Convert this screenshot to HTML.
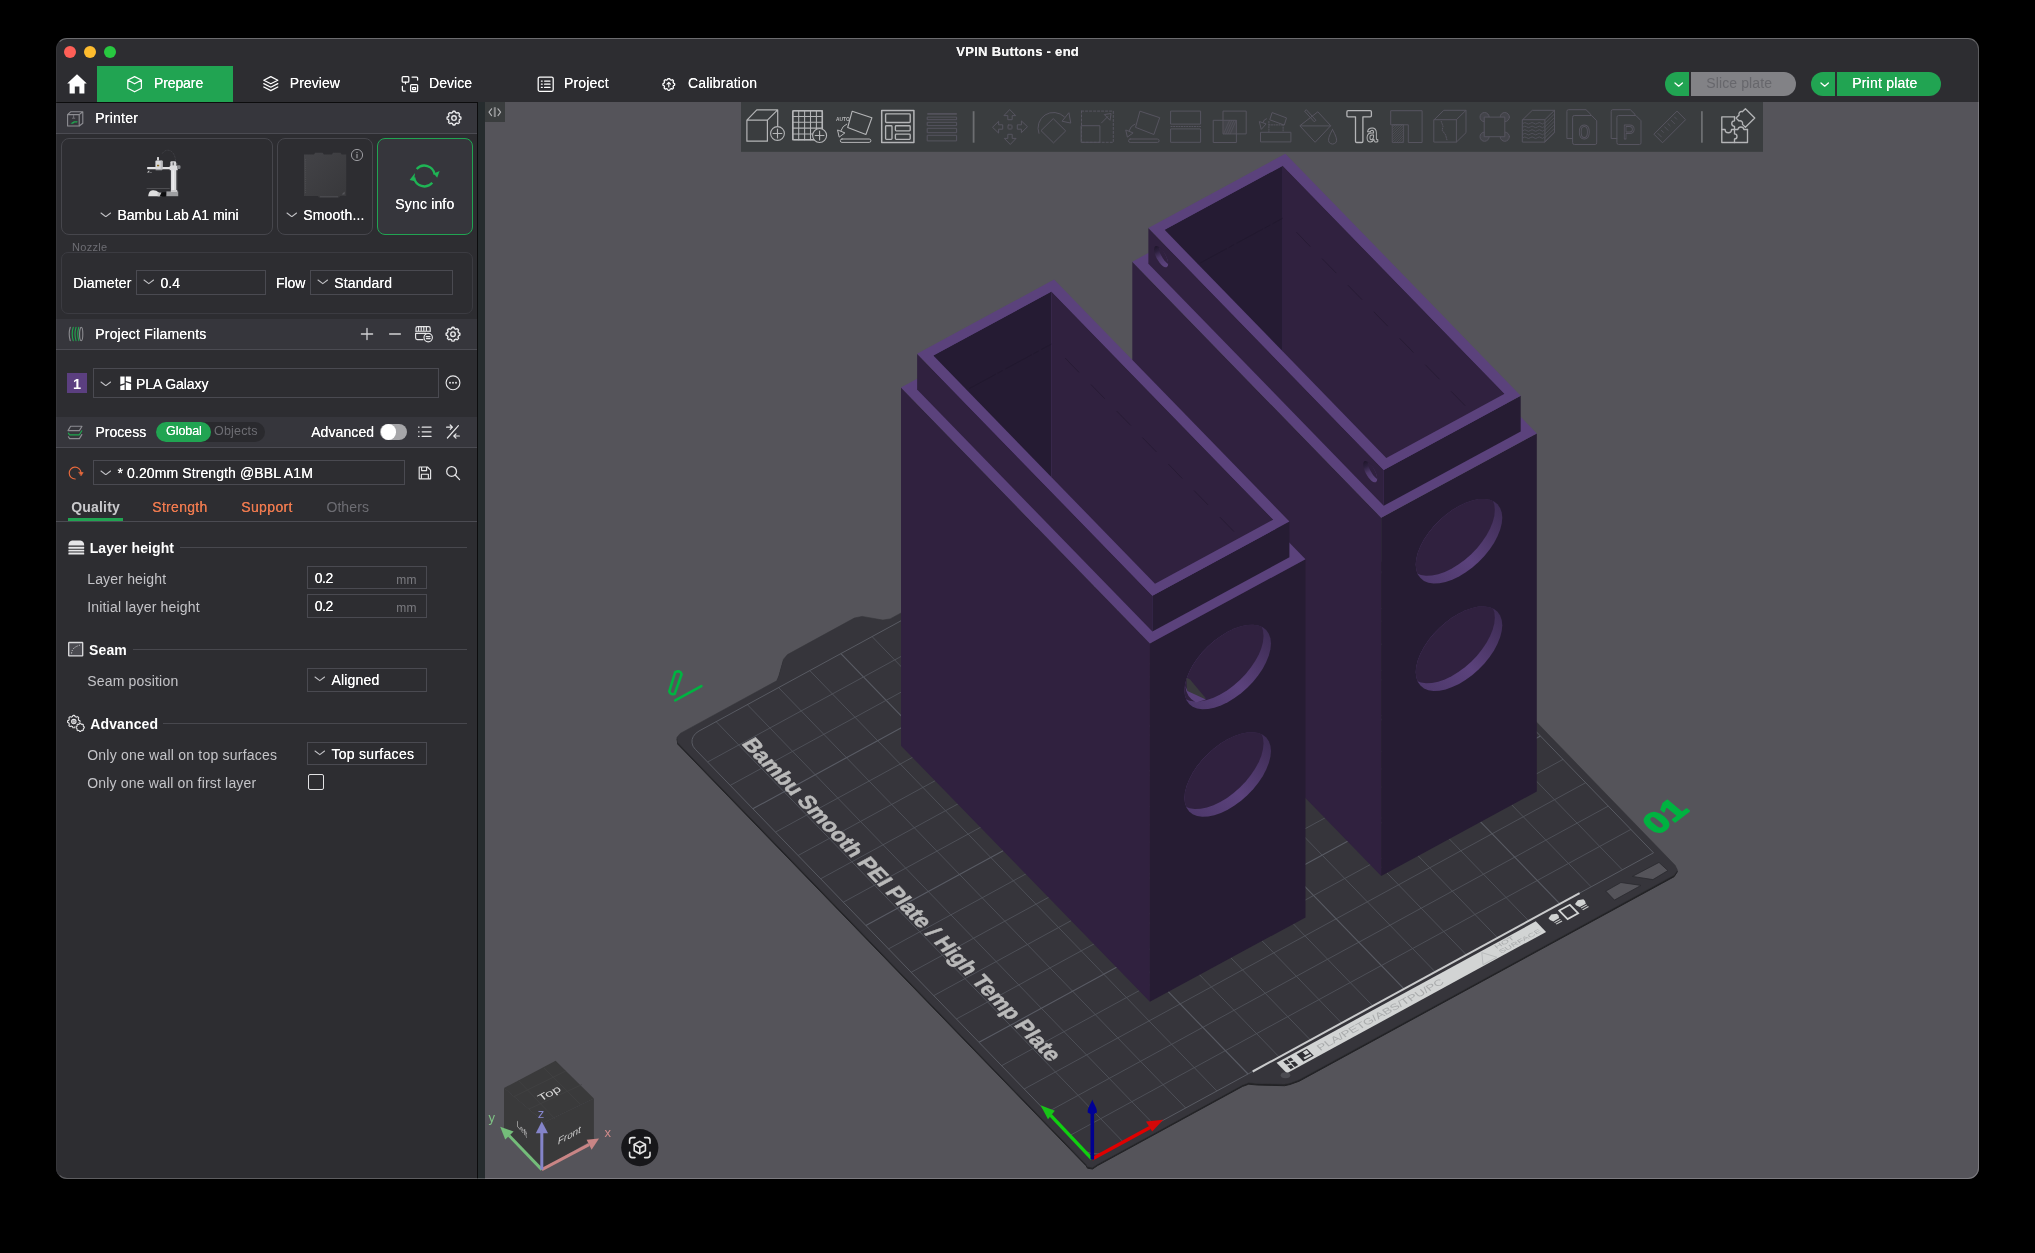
<!DOCTYPE html>
<html><head><meta charset="utf-8"><title>Bambu Studio</title><style>
html,body{margin:0;padding:0;background:#000;}
body{width:2035px;height:1253px;overflow:hidden;position:relative;font-family:"Liberation Sans",sans-serif;}
.win{position:absolute;left:56px;top:38px;width:1923px;height:1141px;border-radius:11px;overflow:hidden;background:#2d2d31;}
.in{position:absolute;left:-56px;top:-38px;width:2035px;height:1253px;will-change:transform;}
.a{position:absolute;}
.t{position:absolute;white-space:pre;font-family:"Liberation Sans",sans-serif;}
.edge{position:absolute;left:56px;top:38px;width:1923px;height:1141px;border-radius:11px;box-sizing:border-box;border:1px solid rgba(255,255,255,.23);border-top-color:rgba(255,255,255,.3);border-left-color:rgba(255,255,255,.05);pointer-events:none;}
</style></head>
<body>
<div class="win"><div class="in">
<div class="a" style="left:485.1px;top:101.8px;width:1494px;height:1078px;background:#55545a"></div>
<svg style="position:absolute;left:485px;top:102px;opacity:.999" width="1494" height="1077" viewBox="485 102 1494 1077">
<defs><linearGradient id="cylg" x1="0" y1="1" x2="1" y2="0"><stop offset="0" stop-color="#4c3769"/><stop offset=".45" stop-color="#5b427c"/><stop offset=".8" stop-color="#46325f"/><stop offset="1" stop-color="#3a2a50"/></linearGradient><linearGradient id="shg" x1="0" y1="0" x2="0.35" y2="1"><stop offset="0" stop-color="#1d1529"/><stop offset=".3" stop-color="#2e213f"/><stop offset=".6" stop-color="#4d3869"/><stop offset="1" stop-color="#5b427c"/></linearGradient></defs>
<polygon points="1086.1,1165.8 677.8,744.2 677.0,738.9 680.3,735.0 776.7,682.4 778.8,677.7 783.5,660.9 787.5,656.2 854.3,619.7 862.1,618.0 882.8,621.7 890.2,620.5 1032.5,542.9 1036.9,537.6 1038.3,521.8 1044.7,516.2 1110.2,480.4 1118.3,478.9 1139.8,481.4 1146.3,480.7 1239.5,429.9 1247.0,428.7 1253.5,431.5 1675.1,866.9 1677.4,871.7 1674.1,876.7 1299.2,1081.2 1290.0,1084.5 1284.5,1085.7 1257.1,1085.0 1248.7,1084.2 1242.4,1086.5 1097.7,1165.5 1092.5,1169.0 1087.5,1168.2" fill="#232326" stroke="#232326" stroke-width="1" stroke-linejoin="round"/>
<polygon points="1086.1,1164.2 677.8,742.6 677.0,737.3 680.3,733.4 776.7,680.8 778.8,676.1 783.5,659.3 787.5,654.6 854.3,618.1 862.1,616.4 882.8,620.1 890.2,618.9 1032.5,541.3 1036.9,536.0 1038.3,520.2 1044.7,514.6 1110.2,478.8 1118.3,477.3 1139.8,479.8 1146.3,479.1 1239.5,428.3 1247.0,427.1 1253.5,429.9 1675.1,865.3 1677.4,870.1 1674.1,875.1 1299.2,1079.6 1290.0,1082.9 1284.5,1084.1 1257.1,1083.4 1248.7,1082.6 1242.4,1084.9 1097.7,1163.9 1092.5,1167.4 1087.5,1166.6" fill="#36353b" stroke="#36353b" stroke-width="0.6" stroke-linejoin="round"/>
<polygon points="1605.8,891.1 1620.9,882.5 1641.0,885.4 1614.4,900.1" fill="#55545a" stroke="#2a2a2e" stroke-width="0.8" stroke-linejoin="round"/>
<polygon points="1632.4,876.4 1659.0,862.4 1667.9,870.6 1652.9,879.6" fill="#55545a" stroke="#2a2a2e" stroke-width="0.8" stroke-linejoin="round"/>
<g><line x1="1123.3" y1="1142.1" x2="716.2" y2="721.7" stroke="#50525a" stroke-width="0.9"/><line x1="1069.5" y1="1135.7" x2="1630.9" y2="829.4" stroke="#50525a" stroke-width="0.9"/><line x1="1154.5" y1="1125.1" x2="747.4" y2="704.7" stroke="#50525a" stroke-width="0.9"/><line x1="1046.9" y1="1112.4" x2="1608.3" y2="806.1" stroke="#50525a" stroke-width="0.9"/><line x1="1185.7" y1="1108.0" x2="778.6" y2="687.6" stroke="#50525a" stroke-width="0.9"/><line x1="1024.2" y1="1089.0" x2="1585.7" y2="782.7" stroke="#50525a" stroke-width="0.9"/><line x1="1216.9" y1="1091.0" x2="809.8" y2="670.6" stroke="#50525a" stroke-width="0.9"/><line x1="1001.6" y1="1065.7" x2="1563.0" y2="759.4" stroke="#50525a" stroke-width="0.9"/><line x1="1248.0" y1="1074.0" x2="840.9" y2="653.6" stroke="#595b64" stroke-width="1.1"/><line x1="979.0" y1="1042.3" x2="1540.4" y2="736.0" stroke="#595b64" stroke-width="1.1"/><line x1="1279.2" y1="1057.0" x2="872.1" y2="636.6" stroke="#50525a" stroke-width="0.9"/><line x1="956.4" y1="1019.0" x2="1517.8" y2="712.7" stroke="#50525a" stroke-width="0.9"/><line x1="1310.4" y1="1040.0" x2="903.3" y2="619.6" stroke="#50525a" stroke-width="0.9"/><line x1="933.8" y1="995.6" x2="1495.2" y2="689.3" stroke="#50525a" stroke-width="0.9"/><line x1="1341.6" y1="1023.0" x2="934.5" y2="602.6" stroke="#50525a" stroke-width="0.9"/><line x1="911.2" y1="972.3" x2="1472.6" y2="665.9" stroke="#50525a" stroke-width="0.9"/><line x1="1372.8" y1="1005.9" x2="965.7" y2="585.5" stroke="#50525a" stroke-width="0.9"/><line x1="888.5" y1="948.9" x2="1449.9" y2="642.6" stroke="#50525a" stroke-width="0.9"/><line x1="1404.0" y1="988.9" x2="996.9" y2="568.5" stroke="#595b64" stroke-width="1.1"/><line x1="865.9" y1="925.5" x2="1427.3" y2="619.2" stroke="#595b64" stroke-width="1.1"/><line x1="1435.2" y1="971.9" x2="1028.1" y2="551.5" stroke="#50525a" stroke-width="0.9"/><line x1="843.3" y1="902.2" x2="1404.7" y2="595.9" stroke="#50525a" stroke-width="0.9"/><line x1="1466.4" y1="954.9" x2="1059.3" y2="534.5" stroke="#50525a" stroke-width="0.9"/><line x1="820.7" y1="878.8" x2="1382.1" y2="572.5" stroke="#50525a" stroke-width="0.9"/><line x1="1497.6" y1="937.9" x2="1090.5" y2="517.5" stroke="#50525a" stroke-width="0.9"/><line x1="798.1" y1="855.5" x2="1359.5" y2="549.2" stroke="#50525a" stroke-width="0.9"/><line x1="1528.7" y1="920.9" x2="1121.6" y2="500.5" stroke="#50525a" stroke-width="0.9"/><line x1="775.5" y1="832.1" x2="1336.9" y2="525.8" stroke="#50525a" stroke-width="0.9"/><line x1="1559.9" y1="903.8" x2="1152.8" y2="483.4" stroke="#595b64" stroke-width="1.1"/><line x1="752.8" y1="808.8" x2="1314.2" y2="502.5" stroke="#595b64" stroke-width="1.1"/><line x1="1591.1" y1="886.8" x2="1184.0" y2="466.4" stroke="#50525a" stroke-width="0.9"/><line x1="730.2" y1="785.4" x2="1291.6" y2="479.1" stroke="#50525a" stroke-width="0.9"/><line x1="1622.3" y1="869.8" x2="1215.2" y2="449.4" stroke="#50525a" stroke-width="0.9"/><line x1="707.6" y1="762.0" x2="1269.0" y2="455.7" stroke="#50525a" stroke-width="0.9"/></g>
<path d="M1256.6 442.9 L1253.5 440.4 L1249.6 438.7 L1245.3 437.7 L1240.7 437.6 L1236.3 438.4 L1232.4 440.0 L699.0 731.0 L695.7 733.4 L693.4 736.3 L692.1 739.5 L692.0 742.9 L693.0 746.2 L695.2 749.2 L1081.9 1148.6 L1085.0 1151.0 L1088.9 1152.8 L1093.2 1153.8 L1097.8 1153.9 L1102.2 1153.1 L1106.1 1151.4 L1653.5 852.8Z" fill="none" stroke="#585a62" stroke-width="1"/>
<text transform="matrix(2.2617 2.3356 -3.1189 1.7017 741.0 743.8)" font-family="Liberation Sans" font-weight="700" font-size="6.3" fill="#bababa" stroke="#bababa" stroke-width="0.16" textLength="136.4" lengthAdjust="spacingAndGlyphs">Bambu Smooth PEI Plate / High Temp Plate</text>
<line x1="1252.7" y1="1071.5" x2="1579.6" y2="893.1" stroke="#c9cacb" stroke-width="2"/>
<polygon points="1276.6,1062.7 1535.8,921.3 1546.1,931.9 1286.9,1073.3" fill="#d2d4d4" />
<polygon points="1283.2,1061.6 1286.5,1059.8 1290.1,1063.6 1286.2,1064.6" fill="#2f2f34" />
<polygon points="1287.3,1065.8 1291.2,1064.7 1293.8,1067.4 1290.6,1069.2" fill="#2f2f34" />
<polygon points="1287.4,1059.3 1290.9,1057.4 1293.6,1060.2 1289.5,1061.4" fill="#2f2f34" />
<polygon points="1290.6,1062.6 1294.7,1061.4 1298.2,1065.0 1294.8,1066.9" fill="#2f2f34" />
<polygon points="1296.6,1054.3 1306.9,1048.7 1313.8,1055.8 1303.5,1061.4" fill="#2f2f34" />
<polygon points="1302.7,1052.2 1306.6,1050.1 1309.3,1052.9 1305.4,1055.0" fill="#d2d4d4" />
<polygon points="1303.3,1057.8 1310.4,1053.9 1311.8,1055.5 1304.8,1059.3" fill="#d2d4d4" />
<text transform="matrix(3.1189 -1.7017 2.2617 2.3356 1320.2 1051.1)" font-family="Liberation Sans" font-size="3.0" fill="#a9abac" textLength="40" lengthAdjust="spacingAndGlyphs">PLA/PETG/ABS/TPU/PC</text>
<text transform="matrix(3.1189 -1.7017 2.2617 2.3356 1496.5 949.1)" font-family="Liberation Sans" font-size="1.9" fill="#a9abac" textLength="6" lengthAdjust="spacingAndGlyphs">HOT</text>
<text transform="matrix(3.1189 -1.7017 2.2617 2.3356 1501.1 953.8)" font-family="Liberation Sans" font-size="1.9" fill="#a9abac" textLength="13" lengthAdjust="spacingAndGlyphs">SURFACE</text>
<polygon points="1483.0,964.7 1481.8,952.6 1496.8,957.2" fill="none" stroke="#b4b6b7" stroke-width="0.8"/>
<polygon points="1559.3,910.6 1569.9,904.8 1578.2,913.3 1567.6,919.1" fill="none" stroke="#d3d5d5" stroke-width="1.7"/>
<polygon points="1551.3,914.6 1556.9,913.7 1558.5,915.4 1559.2,918.1 1553.3,921.4 1550.0,920.0 1548.5,918.3" fill="#d0d2d2" />
<polygon points="1554.1,922.2 1560.0,919.0 1560.8,919.8 1554.9,923.0" fill="#c4c6c6" />
<polygon points="1555.7,923.8 1561.6,920.6 1562.4,921.4 1556.5,924.6" fill="#c4c6c6" />
<polygon points="1577.8,900.2 1583.4,899.3 1585.0,900.9 1585.8,903.7 1579.8,906.9 1576.5,905.5 1575.0,903.9" fill="#d0d2d2" />
<polygon points="1580.6,907.7 1586.5,904.5 1587.3,905.3 1581.4,908.5" fill="#c4c6c6" />
<polygon points="1582.2,909.4 1588.1,906.1 1588.9,906.9 1583.0,910.2" fill="#c4c6c6" />
<ellipse cx="1285.5" cy="1075.3" rx="4.8" ry="3" fill="#4b4b51"/>
<polygon points="1381.2,875.9 1132.3,619.9 1132.3,261.7 1381.2,517.7" fill="#30213f" />
<polygon points="1381.2,875.9 1536.8,791.5 1536.8,433.4 1381.2,517.7" fill="#261c33" />
<polygon points="1381.2,517.7 1536.8,433.4 1287.9,177.4 1132.3,261.7" fill="#5b427c" />
<polygon points="1383.7,505.7 1148.4,263.7 1148.4,227.9 1383.7,469.9" fill="#30213f" />
<polygon points="1383.7,505.7 1520.7,431.4 1520.7,395.7 1383.7,469.9" fill="#261c33" />
<polygon points="1383.7,469.9 1520.7,395.7 1285.4,153.7 1148.4,227.9" fill="#5b427c" />
<clipPath id="cav1"><polygon points="1386.3,457.9 1504.6,393.8 1282.8,165.7 1164.6,229.8"/></clipPath>
<g clip-path="url(#cav1)">
<polygon points="1164.6,229.8 1282.8,165.7 1282.8,495.3 1164.6,559.4" fill="#251b33" />
<polygon points="1282.8,165.7 1504.6,393.8 1504.6,723.3 1282.8,495.3" fill="#30213f" />
<line x1="1164.6" y1="282.3" x2="1282.8" y2="218.2" stroke="#1d1528" stroke-width="0.7" stroke-dasharray="30 2 6 3" opacity=".55"/>
<line x1="1296.4" y1="232.2" x2="1504.6" y2="446.2" stroke="#1f172b" stroke-width="0.8" stroke-dasharray="20 17" opacity=".6"/>
</g>
<clipPath id="h2"><path d="M1502.3 517.7 L1501.7 512.5 L1500.1 508.0 L1497.5 504.3 L1494.0 501.5 L1489.6 499.7 L1484.4 498.9 L1478.6 499.1 L1472.4 500.4 L1465.8 502.7 L1459.0 505.9 L1452.2 510.1 L1445.6 514.9 L1439.4 520.4 L1433.6 526.5 L1428.4 532.9 L1424.0 539.4 L1420.5 546.1 L1417.9 552.6 L1416.3 558.8 L1415.7 564.6 L1416.3 569.9 L1417.9 574.4 L1420.5 578.1 L1424.0 580.9 L1428.4 582.7 L1433.6 583.5 L1439.4 583.2 L1445.6 581.9 L1452.2 579.7 L1459.0 576.4 L1465.8 572.3 L1472.4 567.5 L1478.6 561.9 L1484.4 555.9 L1489.6 549.5 L1494.0 542.9 L1497.5 536.3 L1500.1 529.8 L1501.7 523.5Z"/></clipPath>
<path d="M1502.3 517.7 L1501.7 512.5 L1500.1 508.0 L1497.5 504.3 L1494.0 501.5 L1489.6 499.7 L1484.4 498.9 L1478.6 499.1 L1472.4 500.4 L1465.8 502.7 L1459.0 505.9 L1452.2 510.1 L1445.6 514.9 L1439.4 520.4 L1433.6 526.5 L1428.4 532.9 L1424.0 539.4 L1420.5 546.1 L1417.9 552.6 L1416.3 558.8 L1415.7 564.6 L1416.3 569.9 L1417.9 574.4 L1420.5 578.1 L1424.0 580.9 L1428.4 582.7 L1433.6 583.5 L1439.4 583.2 L1445.6 581.9 L1452.2 579.7 L1459.0 576.4 L1465.8 572.3 L1472.4 567.5 L1478.6 561.9 L1484.4 555.9 L1489.6 549.5 L1494.0 542.9 L1497.5 536.3 L1500.1 529.8 L1501.7 523.5Z" fill="url(#cylg)"/>
<g clip-path="url(#h2)"><path d="M1494.8 510.1 L1494.3 504.8 L1492.7 500.3 L1490.1 496.6 L1486.5 493.8 L1482.1 492.0 L1477.0 491.2 L1471.2 491.5 L1464.9 492.7 L1458.3 495.0 L1451.5 498.3 L1444.8 502.4 L1438.2 507.2 L1431.9 512.8 L1426.1 518.8 L1420.9 525.2 L1416.5 531.8 L1413.0 538.4 L1410.4 544.9 L1408.8 551.2 L1408.3 557.0 L1408.8 562.2 L1410.4 566.7 L1413.0 570.4 L1416.5 573.2 L1420.9 575.0 L1426.1 575.8 L1431.9 575.5 L1438.2 574.3 L1444.8 572.0 L1451.5 568.7 L1458.3 564.6 L1464.9 559.8 L1471.2 554.3 L1477.0 548.2 L1482.1 541.8 L1486.5 535.2 L1490.1 528.6 L1492.7 522.1 L1494.3 515.9Z" fill="#30213f"/></g>
<clipPath id="h3"><path d="M1502.3 625.2 L1501.7 620.0 L1500.1 615.5 L1497.5 611.8 L1494.0 609.0 L1489.6 607.2 L1484.4 606.4 L1478.6 606.6 L1472.4 607.9 L1465.8 610.2 L1459.0 613.4 L1452.2 617.5 L1445.6 622.4 L1439.4 627.9 L1433.6 633.9 L1428.4 640.3 L1424.0 646.9 L1420.5 653.6 L1417.9 660.1 L1416.3 666.3 L1415.7 672.1 L1416.3 677.3 L1417.9 681.9 L1420.5 685.6 L1424.0 688.4 L1428.4 690.2 L1433.6 691.0 L1439.4 690.7 L1445.6 689.4 L1452.2 687.1 L1459.0 683.9 L1465.8 679.8 L1472.4 674.9 L1478.6 669.4 L1484.4 663.4 L1489.6 657.0 L1494.0 650.4 L1497.5 643.8 L1500.1 637.3 L1501.7 631.0Z"/></clipPath>
<path d="M1502.3 625.2 L1501.7 620.0 L1500.1 615.5 L1497.5 611.8 L1494.0 609.0 L1489.6 607.2 L1484.4 606.4 L1478.6 606.6 L1472.4 607.9 L1465.8 610.2 L1459.0 613.4 L1452.2 617.5 L1445.6 622.4 L1439.4 627.9 L1433.6 633.9 L1428.4 640.3 L1424.0 646.9 L1420.5 653.6 L1417.9 660.1 L1416.3 666.3 L1415.7 672.1 L1416.3 677.3 L1417.9 681.9 L1420.5 685.6 L1424.0 688.4 L1428.4 690.2 L1433.6 691.0 L1439.4 690.7 L1445.6 689.4 L1452.2 687.1 L1459.0 683.9 L1465.8 679.8 L1472.4 674.9 L1478.6 669.4 L1484.4 663.4 L1489.6 657.0 L1494.0 650.4 L1497.5 643.8 L1500.1 637.3 L1501.7 631.0Z" fill="url(#cylg)"/>
<g clip-path="url(#h3)"><path d="M1494.8 617.5 L1494.3 612.3 L1492.7 607.8 L1490.1 604.1 L1486.5 601.3 L1482.1 599.5 L1477.0 598.7 L1471.2 598.9 L1464.9 600.2 L1458.3 602.5 L1451.5 605.8 L1444.8 609.9 L1438.2 614.7 L1431.9 620.2 L1426.1 626.3 L1420.9 632.7 L1416.5 639.3 L1413.0 645.9 L1410.4 652.4 L1408.8 658.6 L1408.3 664.4 L1408.8 669.7 L1410.4 674.2 L1413.0 677.9 L1416.5 680.7 L1420.9 682.5 L1426.1 683.3 L1431.9 683.0 L1438.2 681.7 L1444.8 679.5 L1451.5 676.2 L1458.3 672.1 L1464.9 667.3 L1471.2 661.7 L1477.0 655.7 L1482.1 649.3 L1486.5 642.7 L1490.1 636.1 L1492.7 629.6 L1494.3 623.3Z" fill="#30213f"/></g>
<clipPath id="sh4"><path d="M1154.1 249.4 L1154.3 247.9 L1154.8 246.8 L1155.6 246.1 L1156.7 246.0 L1158.1 246.4 L1159.6 247.4 L1161.1 248.8 L1162.7 250.6 L1164.2 252.7 L1165.5 255.0 L1166.6 257.4 L1167.4 259.7 L1168.0 261.9 L1168.1 263.9 L1168.0 265.4 L1167.4 266.6 L1166.6 267.2 L1165.5 267.3 L1164.2 266.9 L1162.7 265.9 L1161.1 264.5 L1159.6 262.7 L1158.1 260.6 L1156.7 258.3 L1155.6 255.9 L1154.8 253.6 L1154.3 251.4Z"/></clipPath>
<path d="M1154.1 249.4 L1154.3 247.9 L1154.8 246.8 L1155.6 246.1 L1156.7 246.0 L1158.1 246.4 L1159.6 247.4 L1161.1 248.8 L1162.7 250.6 L1164.2 252.7 L1165.5 255.0 L1166.6 257.4 L1167.4 259.7 L1168.0 261.9 L1168.1 263.9 L1168.0 265.4 L1167.4 266.6 L1166.6 267.2 L1165.5 267.3 L1164.2 266.9 L1162.7 265.9 L1161.1 264.5 L1159.6 262.7 L1158.1 260.6 L1156.7 258.3 L1155.6 255.9 L1154.8 253.6 L1154.3 251.4Z" fill="url(#shg)"/>
<g clip-path="url(#sh4)"><path d="M1158.8 246.9 L1158.9 245.3 L1159.5 244.2 L1160.3 243.6 L1161.4 243.5 L1162.7 243.9 L1164.2 244.9 L1165.8 246.3 L1167.3 248.1 L1168.8 250.2 L1170.2 252.5 L1171.3 254.9 L1172.1 257.2 L1172.6 259.4 L1172.8 261.3 L1172.6 262.9 L1172.1 264.0 L1171.3 264.7 L1170.2 264.8 L1168.8 264.3 L1167.3 263.4 L1165.8 262.0 L1164.2 260.2 L1162.7 258.1 L1161.4 255.8 L1160.3 253.4 L1159.5 251.0 L1158.9 248.8Z" fill="#30213f"/></g>
<clipPath id="sh5"><path d="M1363.2 464.5 L1363.3 462.9 L1363.9 461.8 L1364.7 461.1 L1365.8 461.0 L1367.1 461.5 L1368.6 462.4 L1370.2 463.8 L1371.7 465.6 L1373.2 467.7 L1374.5 470.0 L1375.7 472.4 L1376.5 474.8 L1377.0 477.0 L1377.2 478.9 L1377.0 480.5 L1376.5 481.6 L1375.7 482.2 L1374.5 482.3 L1373.2 481.9 L1371.7 480.9 L1370.2 479.5 L1368.6 477.7 L1367.1 475.6 L1365.8 473.3 L1364.7 470.9 L1363.9 468.6 L1363.3 466.4Z"/></clipPath>
<path d="M1363.2 464.5 L1363.3 462.9 L1363.9 461.8 L1364.7 461.1 L1365.8 461.0 L1367.1 461.5 L1368.6 462.4 L1370.2 463.8 L1371.7 465.6 L1373.2 467.7 L1374.5 470.0 L1375.7 472.4 L1376.5 474.8 L1377.0 477.0 L1377.2 478.9 L1377.0 480.5 L1376.5 481.6 L1375.7 482.2 L1374.5 482.3 L1373.2 481.9 L1371.7 480.9 L1370.2 479.5 L1368.6 477.7 L1367.1 475.6 L1365.8 473.3 L1364.7 470.9 L1363.9 468.6 L1363.3 466.4Z" fill="url(#shg)"/>
<g clip-path="url(#sh5)"><path d="M1367.8 461.9 L1368.0 460.4 L1368.5 459.2 L1369.4 458.6 L1370.5 458.5 L1371.8 458.9 L1373.3 459.9 L1374.8 461.3 L1376.4 463.1 L1377.9 465.2 L1379.2 467.5 L1380.3 469.9 L1381.2 472.2 L1381.7 474.4 L1381.9 476.4 L1381.7 477.9 L1381.2 479.1 L1380.3 479.7 L1379.2 479.8 L1377.9 479.4 L1376.4 478.4 L1374.8 477.0 L1373.3 475.2 L1371.8 473.1 L1370.5 470.8 L1369.4 468.4 L1368.5 466.1 L1368.0 463.9Z" fill="#30213f"/></g>
<polygon points="1149.9,1001.7 901.0,745.7 901.0,387.5 1149.9,643.5" fill="#30213f" />
<polygon points="1149.9,1001.7 1305.5,917.4 1305.5,559.2 1149.9,643.5" fill="#261c33" />
<polygon points="1149.9,643.5 1305.5,559.2 1056.6,303.2 901.0,387.5" fill="#5b427c" />
<polygon points="1152.4,631.5 917.1,389.5 917.1,353.7 1152.4,595.7" fill="#30213f" />
<polygon points="1152.4,631.5 1289.4,557.2 1289.4,521.5 1152.4,595.7" fill="#261c33" />
<polygon points="1152.4,595.7 1289.4,521.5 1054.1,279.5 917.1,353.7" fill="#5b427c" />
<clipPath id="cav6"><polygon points="1155.0,583.7 1273.3,519.6 1051.5,291.5 933.3,355.6"/></clipPath>
<g clip-path="url(#cav6)">
<polygon points="933.3,355.6 1051.5,291.5 1051.5,621.1 933.3,685.2" fill="#251b33" />
<polygon points="1051.5,291.5 1273.3,519.6 1273.3,849.1 1051.5,621.1" fill="#30213f" />
<line x1="933.3" y1="408.1" x2="1051.5" y2="344.0" stroke="#1d1528" stroke-width="0.7" stroke-dasharray="30 2 6 3" opacity=".55"/>
<line x1="1065.1" y1="358.0" x2="1273.3" y2="572.0" stroke="#1f172b" stroke-width="0.8" stroke-dasharray="20 17" opacity=".6"/>
</g>
<clipPath id="h7"><path d="M1271.0 643.5 L1270.4 638.3 L1268.8 633.8 L1266.2 630.1 L1262.7 627.3 L1258.3 625.5 L1253.1 624.7 L1247.3 624.9 L1241.1 626.2 L1234.5 628.5 L1227.7 631.7 L1220.9 635.9 L1214.3 640.7 L1208.1 646.2 L1202.3 652.3 L1197.1 658.7 L1192.7 665.2 L1189.2 671.9 L1186.6 678.4 L1185.0 684.6 L1184.4 690.4 L1185.0 695.7 L1186.6 700.2 L1189.2 703.9 L1192.7 706.7 L1197.1 708.5 L1202.3 709.3 L1208.1 709.0 L1214.3 707.7 L1220.9 705.5 L1227.7 702.2 L1234.5 698.1 L1241.1 693.3 L1247.3 687.7 L1253.1 681.7 L1258.3 675.3 L1262.7 668.7 L1266.2 662.1 L1268.8 655.6 L1270.4 649.3Z"/></clipPath>
<path d="M1271.0 643.5 L1270.4 638.3 L1268.8 633.8 L1266.2 630.1 L1262.7 627.3 L1258.3 625.5 L1253.1 624.7 L1247.3 624.9 L1241.1 626.2 L1234.5 628.5 L1227.7 631.7 L1220.9 635.9 L1214.3 640.7 L1208.1 646.2 L1202.3 652.3 L1197.1 658.7 L1192.7 665.2 L1189.2 671.9 L1186.6 678.4 L1185.0 684.6 L1184.4 690.4 L1185.0 695.7 L1186.6 700.2 L1189.2 703.9 L1192.7 706.7 L1197.1 708.5 L1202.3 709.3 L1208.1 709.0 L1214.3 707.7 L1220.9 705.5 L1227.7 702.2 L1234.5 698.1 L1241.1 693.3 L1247.3 687.7 L1253.1 681.7 L1258.3 675.3 L1262.7 668.7 L1266.2 662.1 L1268.8 655.6 L1270.4 649.3Z" fill="url(#cylg)"/>
<g clip-path="url(#h7)"><path d="M1263.5 635.9 L1263.0 630.6 L1261.4 626.1 L1258.8 622.4 L1255.2 619.6 L1250.8 617.8 L1245.7 617.0 L1239.9 617.3 L1233.6 618.5 L1227.0 620.8 L1220.2 624.1 L1213.5 628.2 L1206.9 633.0 L1200.6 638.6 L1194.8 644.6 L1189.6 651.0 L1185.2 657.6 L1181.7 664.2 L1179.1 670.7 L1177.5 677.0 L1177.0 682.8 L1177.5 688.0 L1179.1 692.5 L1181.7 696.2 L1185.2 699.0 L1189.6 700.8 L1194.8 701.6 L1200.6 701.3 L1206.9 700.1 L1213.5 697.8 L1220.2 694.5 L1227.0 690.4 L1233.6 685.6 L1239.9 680.1 L1245.7 674.0 L1250.8 667.6 L1255.2 661.0 L1258.8 654.4 L1261.4 647.9 L1263.0 641.7Z" fill="#30213f"/></g>
<g clip-path="url(#h7)"><polygon points="1186.4,677.4 1190,679.6 1206,698.6 1198,701 1187,693" fill="#39393d"/><path d="M1185.4 686 Q1186 697 1196 702.6 L1206 699.6 L1187.4 691Z" fill="#5b427c"/></g>
<clipPath id="h8"><path d="M1271.0 751.0 L1270.4 745.8 L1268.8 741.3 L1266.2 737.6 L1262.7 734.8 L1258.3 733.0 L1253.1 732.2 L1247.3 732.4 L1241.1 733.7 L1234.5 736.0 L1227.7 739.2 L1220.9 743.3 L1214.3 748.2 L1208.1 753.7 L1202.3 759.7 L1197.1 766.1 L1192.7 772.7 L1189.2 779.4 L1186.6 785.9 L1185.0 792.1 L1184.4 797.9 L1185.0 803.1 L1186.6 807.7 L1189.2 811.4 L1192.7 814.2 L1197.1 816.0 L1202.3 816.8 L1208.1 816.5 L1214.3 815.2 L1220.9 812.9 L1227.7 809.7 L1234.5 805.6 L1241.1 800.7 L1247.3 795.2 L1253.1 789.2 L1258.3 782.8 L1262.7 776.2 L1266.2 769.6 L1268.8 763.1 L1270.4 756.8Z"/></clipPath>
<path d="M1271.0 751.0 L1270.4 745.8 L1268.8 741.3 L1266.2 737.6 L1262.7 734.8 L1258.3 733.0 L1253.1 732.2 L1247.3 732.4 L1241.1 733.7 L1234.5 736.0 L1227.7 739.2 L1220.9 743.3 L1214.3 748.2 L1208.1 753.7 L1202.3 759.7 L1197.1 766.1 L1192.7 772.7 L1189.2 779.4 L1186.6 785.9 L1185.0 792.1 L1184.4 797.9 L1185.0 803.1 L1186.6 807.7 L1189.2 811.4 L1192.7 814.2 L1197.1 816.0 L1202.3 816.8 L1208.1 816.5 L1214.3 815.2 L1220.9 812.9 L1227.7 809.7 L1234.5 805.6 L1241.1 800.7 L1247.3 795.2 L1253.1 789.2 L1258.3 782.8 L1262.7 776.2 L1266.2 769.6 L1268.8 763.1 L1270.4 756.8Z" fill="url(#cylg)"/>
<g clip-path="url(#h8)"><path d="M1263.5 743.3 L1263.0 738.1 L1261.4 733.6 L1258.8 729.9 L1255.2 727.1 L1250.8 725.3 L1245.7 724.5 L1239.9 724.7 L1233.6 726.0 L1227.0 728.3 L1220.2 731.6 L1213.5 735.7 L1206.9 740.5 L1200.6 746.0 L1194.8 752.1 L1189.6 758.5 L1185.2 765.1 L1181.7 771.7 L1179.1 778.2 L1177.5 784.4 L1177.0 790.2 L1177.5 795.5 L1179.1 800.0 L1181.7 803.7 L1185.2 806.5 L1189.6 808.3 L1194.8 809.1 L1200.6 808.8 L1206.9 807.5 L1213.5 805.3 L1220.2 802.0 L1227.0 797.9 L1233.6 793.1 L1239.9 787.5 L1245.7 781.5 L1250.8 775.1 L1255.2 768.5 L1258.8 761.9 L1261.4 755.4 L1263.0 749.1Z" fill="#30213f"/></g>
<line x1="1092.1" y1="1159.1" x2="1050.5" y2="1115.2" stroke="#10d010" stroke-width="3.4"/>
<polygon points="1040.6,1105.2 1054.8,1110.8 1048.0,1119.2" fill="#18c418"/>
<line x1="1092.1" y1="1159.1" x2="1150" y2="1127.5" stroke="#e00000" stroke-width="3.4"/>
<polygon points="1163.2,1119.8 1152.2,1131.6 1146.0,1121.5" fill="#d40808"/>
<line x1="1092.3" y1="1159.6" x2="1092.3" y2="1112" stroke="#000090" stroke-width="3.6"/>
<path d="M1092.3 1099.6 C1093.6 1104 1097.3 1108 1096.8999999999999 1112.5 Q1092.3 1116 1087.6999999999998 1112.5 C1087.3 1108 1091.0 1104 1092.3 1099.6Z" fill="#000096"/>
<g fill="none" stroke="#00b341" stroke-width="2.6" stroke-linecap="round" stroke-linejoin="round"><path d="M675.2 672.2 L669.3 691.4 Q670.6 695.2 674.6 694.0 L681.6 674.2 Q680.2 669.8 675.2 672.2Z"/><path d="M675.2 700.4 L701.4 686.2"/></g>
<text transform="matrix(0.8 -0.62 0.78 0.66 1657 836)" font-family="Liberation Sans" font-weight="700" font-size="32" fill="#00b341" stroke="#00b341" stroke-width="1.6" stroke-linejoin="round" textLength="41" lengthAdjust="spacingAndGlyphs">01</text>
<polygon points="555.6,1060.8 593.9,1098.4 544.5,1122.3 504.0,1088.0" fill="#3a3a3b"/>
<polygon points="504.0,1088.0 544.5,1122.3 541.8,1169.6 504.0,1130.5" fill="#3a3a3b"/>
<polygon points="544.5,1122.3 593.9,1098.4 593.9,1139.0 541.8,1169.6" fill="#3a3a3b"/>
<g stroke="#424243" stroke-width="0.7" fill="none"><path d="M514 1096.6 L565.8 1071"/><path d="M544 1068 L580.5 1104.5"/><path d="M529 1109 L582 1084.5"/><path d="M518 1080 L555 1119"/></g>
<text transform="matrix(0.88 -0.46 0.5 0.6 541 1101.5)" font-family="Liberation Sans" font-size="13" fill="#d6d6d6" textLength="24" lengthAdjust="spacingAndGlyphs">Top</text>
<text transform="matrix(0.74 -0.4 -0.12 0.95 557.6 1145)" font-family="Liberation Sans" font-size="11" fill="#d2d2d2" textLength="31" lengthAdjust="spacingAndGlyphs">Front</text>
<text transform="matrix(0.52 0.6 0 0.95 516.7 1126)" font-family="Liberation Sans" font-size="9" fill="#c8c8c8" textLength="20" lengthAdjust="spacingAndGlyphs">Left</text>
<line x1="541.8" y1="1169.6" x2="509" y2="1135.5" stroke="#74bd7a" stroke-width="3"/>
<polygon points="500.2,1126.8 513.6,1131.5 505.2,1139.6" fill="#74bd7a"/>
<line x1="541.8" y1="1169.6" x2="589" y2="1144.6" stroke="#c98585" stroke-width="3"/>
<polygon points="599,1138.6 591.6,1149.8 586.6,1139.8" fill="#c98585"/>
<line x1="541.8" y1="1169.6" x2="541.8" y2="1132" stroke="#8484c9" stroke-width="3"/>
<polygon points="541.8,1121.4 548,1133.2 535.8,1133.2" fill="#8484c9"/>
<text x="537.8" y="1118" font-family="Liberation Sans" font-size="13" fill="#8686cc">z</text>
<text x="488.6" y="1122.2" font-family="Liberation Sans" font-size="13" fill="#7ec184">y</text>
<text x="604.4" y="1136.6" font-family="Liberation Sans" font-size="13" fill="#cf8a8a">x</text>
<circle cx="639.8" cy="1147.6" r="18.6" fill="#17171a"/>
<g fill="none" stroke="#e4e4e4" stroke-width="1.6" stroke-linecap="round" stroke-linejoin="round"><path d="M629.6 1143.2 V1140.2 Q629.6 1137.6 632.2 1137.6 H635"/><path d="M650 1143.2 V1140.2 Q650 1137.6 647.4 1137.6 H644.6"/><path d="M629.6 1152.2 V1155 Q629.6 1157.6 632.2 1157.6 H635"/><path d="M650 1152.2 V1155 Q650 1157.6 647.4 1157.6 H644.6"/><path d="M639.8 1141.4 L645.4 1144.4 V1150.8 L639.8 1153.8 L634.2 1150.8 V1144.4Z"/><path d="M634.4 1144.5 L639.8 1147.5 L645.2 1144.5 M639.8 1147.5 V1153.6"/></g>
</svg>
<svg style="position:absolute;left:741px;top:102px" width="1022" height="50" viewBox="741 102 1022 50">
<rect x="741" y="102" width="1022" height="49.8" fill="#3a3d3f"/>
<g transform="translate(746.1 109.3)" fill="none" stroke="#b4b5b7" stroke-width="1" stroke-linejoin="round" stroke-linecap="round"><path d="M0.8 10.9 H21.3 V31.9 H0.8Z M0.8 10.9 L10.7 0.6 H31.6 L21.3 10.9 M31.6 0.6 V19" stroke-width="1.2"/><circle cx="31.4" cy="24.2" r="6.9" fill="#3a3d3f" stroke-width="1.1"/><path d="M31.4 19.8 V28.6 M27 24.2 H35.8" stroke-width="1.1"/></g>
<g transform="translate(792.2 109.3)" fill="none" stroke="#b4b5b7" stroke-width="1" stroke-linejoin="round" stroke-linecap="round"><g stroke-width="1.05"><path d="M0.6 1.4 V30.4 M0.6 1.40 H30.1"/><path d="M6.5 1.4 V30.4 M0.6 7.20 H30.1"/><path d="M12.4 1.4 V30.4 M0.6 13.00 H30.1"/><path d="M18.3 1.4 V30.4 M0.6 18.80 H30.1"/><path d="M24.2 1.4 V30.4 M0.6 24.60 H30.1"/><path d="M30.1 1.4 V30.4 M0.6 30.40 H30.1"/><rect x="0.6" y="1.4" width="29.5" height="29" rx="1.2" stroke-width="1.5"/></g><circle cx="27.4" cy="26.2" r="7" fill="#3a3d3f" stroke-width="1.1"/><path d="M27.4 21.8 V30.6 M23 26.2 H31.8" stroke-width="1.1"/></g>
<g transform="translate(836.3 109.3)" fill="none" stroke="#b4b5b7" stroke-width="1" stroke-linejoin="round" stroke-linecap="round"><path d="M15.8 2 L35.6 8.4 L29.6 25.2 L11.4 18.2Z" stroke-width="1.1"/><path d="M10.4 14.8 Q6 16.6 4.6 21.4" stroke-width="1"/><path d="M1.6 20.8 L8.6 23.6 L3.2 27.6Z" stroke-width="1"/><rect x="4" y="29.7" width="30.6" height="3.4" rx="1.7" stroke-width="1"/><text x="-0.2" y="11.6" font-family="Liberation Sans" font-weight="700" font-size="6.2" fill="#b4b5b7" stroke="none" textLength="13.6" lengthAdjust="spacingAndGlyphs">AUTO</text></g>
<g transform="translate(881.0 109.3)" fill="none" stroke="#b4b5b7" stroke-width="1" stroke-linejoin="round" stroke-linecap="round"><rect x="0.7" y="1.3" width="32.2" height="32" stroke-width="1.5"/><rect x="4.6" y="4.6" width="24.6" height="8.6" rx=".8" stroke-width="1.35"/><rect x="4.6" y="16.4" width="6.4" height="13.6" rx=".8" stroke-width="1.35"/><rect x="14.4" y="16.4" width="14.8" height="5.2" rx=".8" stroke-width="1.35"/><rect x="14.4" y="24.8" width="14.8" height="5.2" rx=".8" stroke-width="1.35"/></g>
<g transform="translate(926.6 109.3)" fill="none" stroke="#56545f" stroke-width="1" stroke-linejoin="round" stroke-linecap="round"><rect x="0.7" y="3.8" width="29.5" height="1.6" fill="#56545f" stroke="none"/><rect x="1" y="7.8" width="29" height="2.6"/><rect x="1" y="13" width="29" height="3.3"/><rect x="1" y="19" width="29" height="4.4"/><rect x="1" y="26" width="29" height="5.6"/></g>
<rect x="972.7" y="111.2" width="1.8" height="31.5" fill="#6c6e71"/>
<g transform="translate(992.5 109.3)" fill="none" stroke="#56545f" stroke-width="1" stroke-linejoin="round" stroke-linecap="round"><path d="M17.5 0.5 L23.2 6.3 H19.7 V10.4 H15.3 V6.3 H11.8 Z"/><g transform="rotate(90 17.5 17.7)"><path d="M17.5 0.5 L23.2 6.3 H19.7 V10.4 H15.3 V6.3 H11.8 Z"/></g><g transform="rotate(180 17.5 17.7)"><path d="M17.5 0.5 L23.2 6.3 H19.7 V10.4 H15.3 V6.3 H11.8 Z"/></g><g transform="rotate(270 17.5 17.7)"><path d="M17.5 0.5 L23.2 6.3 H19.7 V10.4 H15.3 V6.3 H11.8 Z"/></g><rect x="15.5" y="15.7" width="4" height="4" rx=".6"/></g>
<g transform="translate(1037.3 109.3)" fill="none" stroke="#56545f" stroke-width="1" stroke-linejoin="round" stroke-linecap="round"><path d="M16.2 9.6 L28.4 21.6 L16.2 33.6 L4 21.6Z"/><path d="M1.6 24 A15.6 15.6 0 0 1 27 7.4"/><path d="M25 11.6 L31.6 3.4 L33.4 13.4Z"/></g>
<g transform="translate(1080.3 109.3)" fill="none" stroke="#56545f" stroke-width="1" stroke-linejoin="round" stroke-linecap="round"><rect x="1.2" y="1.8" width="31.8" height="31.2" stroke-dasharray="2.2 1.8"/><rect x="1.2" y="16.4" width="18.4" height="16.6"/><path d="M21.2 13.6 L27.6 7.2 M24.4 5.2 L30.8 4.2 L29.8 10.6Z"/></g>
<g transform="translate(1124.5 109.3)" fill="none" stroke="#56545f" stroke-width="1" stroke-linejoin="round" stroke-linecap="round"><path d="M15.8 2 L35.2 8.4 L29.4 25.2 L11.4 18.2Z"/><path d="M10.4 14.8 Q6 16.6 4.6 21.4"/><path d="M1.6 20.8 L8.6 23.6 L3.2 27.6Z"/><rect x="4" y="29.7" width="30.6" height="3.4" rx="1.7"/></g>
<g transform="translate(1170.4 109.3)" fill="none" stroke="#56545f" stroke-width="1" stroke-linejoin="round" stroke-linecap="round"><rect x="0.6" y="1.8" width="29.6" height="13"/><rect x="0.6" y="19.6" width="29.6" height="13.4"/><path d="M0.6 17.2 H30.2" stroke-dasharray="1.2 1.4"/></g>
<g transform="translate(1213.0 109.3)" fill="none" stroke="#56545f" stroke-width="1" stroke-linejoin="round" stroke-linecap="round"><rect x="10.4" y="1.8" width="22.8" height="22.8"/><rect x="0.6" y="11" width="22.8" height="22.2"/><g stroke-width=".7"><path d="M10.6 24.6 L16.6 11"/><path d="M12.8 24.6 L18.8 11"/><path d="M15.0 24.6 L21.0 11"/><path d="M17.2 24.6 L23.2 11"/></g><rect x="10.4" y="11" width="13" height="13.6" fill="#56545f" fill-opacity=".35" stroke="none"/></g>
<g transform="translate(1259.1 109.3)" fill="none" stroke="#56545f" stroke-width="1" stroke-linejoin="round" stroke-linecap="round"><rect x="1.8" y="23" width="30" height="9.6"/><path d="M13.4 3.4 L27.4 8.6 L25.2 15.8 L11 10.6Z"/><path d="M9.8 12.2 V22.6 M24 15.4 V22.6 M9.8 15.6 H24" stroke-dasharray="1.2 1.3"/><path d="M0.6 12.4 L7 14.6 L2.4 19.8Z"/><path d="M7.4 9.4 Q4.6 10 4 13"/></g>
<g transform="translate(1299.5 109.3)" fill="none" stroke="#56545f" stroke-width="1" stroke-linejoin="round" stroke-linecap="round"><path d="M18.6 2.8 L31.2 16.4 L15.6 33 L0.6 16.8Z"/><path d="M0.8 16.6 H31"/><path d="M5.4 1.6 L6.8 0.4 L16.4 11 L15 12.2Z"/><path d="M33 20.2 Q38.6 30 36.6 33 Q33 36.6 29.6 33 Q27.4 30 33 20.2Z"/></g>
<g transform="translate(1346.4 109.3)" fill="none" stroke="#b4b5b7" stroke-width="1" stroke-linejoin="round" stroke-linecap="round"><path d="M1.7 1.4 H23.8 Q25 1.4 25 2.6 V6.3 Q25 7.5 23.8 7.5 H16.5 V32 Q16.5 33.2 15.3 33.2 H10.3 Q9.1 33.2 9.1 32 V7.5 H1.7 Q0.5 7.5 0.5 6.3 V2.6 Q0.5 1.4 1.7 1.4Z" stroke-width="1.3"/><text x="20.1" y="33.2" font-family="Liberation Sans" font-weight="700" font-size="25" fill="#3a3d3f" stroke="#b4b5b7" stroke-width="1.15" stroke-linejoin="round" textLength="11.2" lengthAdjust="spacingAndGlyphs">a</text></g>
<g transform="translate(1390.6 109.3)" fill="none" stroke="#56545f" stroke-width="1" stroke-linejoin="round" stroke-linecap="round"><path d="M0.5 1.4 H31.5 V33.2 H17.7 V15.5 H0.5Z"/><rect x="2" y="15.5" width="11" height="17.7" stroke-width=".8"/><g stroke-width=".7"><path d="M2.0 17.9 L4.4 15.5"/><path d="M2.0 20.3 L6.8 15.5"/><path d="M2.0 22.7 L9.2 15.5"/><path d="M2.0 25.1 L11.6 15.5"/><path d="M2.0 27.5 L13.0 16.5"/><path d="M2.0 29.9 L13.0 18.9"/><path d="M2.0 32.3 L13.0 21.3"/><path d="M3.5 33.2 L13.0 23.7"/><path d="M5.9 33.2 L13.0 26.1"/><path d="M8.3 33.2 L13.0 28.5"/><path d="M10.7 33.2 L13.0 30.9"/></g></g>
<g transform="translate(1433.6 109.3)" fill="none" stroke="#56545f" stroke-width="1" stroke-linejoin="round" stroke-linecap="round"><path d="M0.6 10.4 H22.8 V32.8 H0.6Z M0.6 10.4 L10.2 1 H32.4 L22.8 10.4 M32.4 1 V23.4 L22.8 32.8"/><path d="M7.6 12 L9.4 17 L8.6 21 L12 25.6 L13.6 31.6" stroke-dasharray="1 1.4"/></g>
<g transform="translate(1479.2 109.3)" fill="none" stroke="#56545f" stroke-width="1" stroke-linejoin="round" stroke-linecap="round"><circle cx="5.4" cy="7.8" r="4.6" fill="#56545f" fill-opacity=".35"/><circle cx="25.6" cy="7.8" r="4.6" fill="#56545f" fill-opacity=".35"/><circle cx="5.4" cy="27.4" r="4.6" fill="#56545f" fill-opacity=".35"/><circle cx="25.6" cy="27.4" r="4.6" fill="#56545f" fill-opacity=".35"/><rect x="5.4" y="7.8" width="20.2" height="19.6" fill="#3a3d3f"/></g>
<g transform="translate(1522.1 109.3)" fill="none" stroke="#56545f" stroke-width="1" stroke-linejoin="round" stroke-linecap="round"><path d="M0.6 10.4 H22.8 V32.8 H0.6Z M0.6 10.4 L10.2 1 H32.4 L22.8 10.4 M32.4 1 V23.4 L22.8 32.8"/><path d="M1 14.0 q1.8 -1.6 3.6 0 t3.6 0 t3.6 0 t3.6 0 t3.6 0 t2.6 0" stroke-width=".8"/><path d="M1 17.6 q1.8 -1.6 3.6 0 t3.6 0 t3.6 0 t3.6 0 t3.6 0 t2.6 0" stroke-width=".8"/><path d="M1 21.2 q1.8 -1.6 3.6 0 t3.6 0 t3.6 0 t3.6 0 t3.6 0 t2.6 0" stroke-width=".8"/><path d="M1 24.8 q1.8 -1.6 3.6 0 t3.6 0 t3.6 0 t3.6 0 t3.6 0 t2.6 0" stroke-width=".8"/><path d="M1 28.4 q1.8 -1.6 3.6 0 t3.6 0 t3.6 0 t3.6 0 t3.6 0 t2.6 0" stroke-width=".8"/><path d="M22.8 14.0 L32.4 4.6" stroke-width=".7"/><path d="M22.8 17.6 L32.4 8.2" stroke-width=".7"/><path d="M22.8 21.2 L32.4 11.8" stroke-width=".7"/><path d="M22.8 24.8 L32.4 15.4" stroke-width=".7"/><path d="M22.8 28.4 L32.4 19.0" stroke-width=".7"/><path d="M22.8 32.0 L32.4 22.6" stroke-width=".7"/></g>
<g transform="translate(1566.4 109.3)" fill="none" stroke="#56545f" stroke-width="1" stroke-linejoin="round" stroke-linecap="round"><path d="M6.2 29.2 H0.5 V2 Q0.5 0.4 2.1 0.4 H19.6 L24.3 5 V6.2"/><path d="M6.2 7.8 Q6.2 6.2 7.8 6.2 H25.2 L30.3 11.4 V33.6 Q30.3 35.2 28.7 35.2 H7.8 Q6.2 35.2 6.2 33.6Z"/><text x="12.2" y="29.4" font-family="Liberation Sans" font-size="21" fill="#3a3d3f" stroke="#56545f" stroke-width=".9" textLength="11.6" lengthAdjust="spacingAndGlyphs">0</text></g>
<g transform="translate(1610.7 109.3)" fill="none" stroke="#56545f" stroke-width="1" stroke-linejoin="round" stroke-linecap="round"><path d="M6.2 29.2 H0.5 V2 Q0.5 0.4 2.1 0.4 H19.6 L24.3 5 V6.2"/><path d="M6.2 7.8 Q6.2 6.2 7.8 6.2 H25.2 L30.3 11.4 V33.6 Q30.3 35.2 28.7 35.2 H7.8 Q6.2 35.2 6.2 33.6Z"/><text x="12" y="29.4" font-family="Liberation Sans" font-size="21" fill="#3a3d3f" stroke="#56545f" stroke-width=".9" textLength="12.4" lengthAdjust="spacingAndGlyphs">P</text></g>
<g transform="translate(1653.6 109.3)" fill="none" stroke="#56545f" stroke-width="1" stroke-linejoin="round" stroke-linecap="round"><path d="M0.6 24.6 L23.4 1.8 L32 10.4 L9.2 33.2Z"/><path d="M4.4 24.2 l3.4 3.4" stroke-width=".8"/><path d="M7.7 20.9 l2.2 2.2" stroke-width=".8"/><path d="M11.0 17.6 l3.4 3.4" stroke-width=".8"/><path d="M14.3 14.3 l2.2 2.2" stroke-width=".8"/><path d="M17.6 11.0 l3.4 3.4" stroke-width=".8"/><path d="M20.9 7.7 l2.2 2.2" stroke-width=".8"/></g>
<rect x="1701" y="111.2" width="1.8" height="31.5" fill="#6c6e71"/>
<g transform="translate(1720.8 109.3)" fill="none" stroke="#b4b5b7" stroke-width="1" stroke-linejoin="round" stroke-linecap="round"><g stroke-width="1.35"><path d="M13.7 7.5 H1 V33.2 H26.7 V20.2"/><path d="M13.7 7.5 V11.5 A2.75 2.75 0 0 0 13.7 17 V20.2"/><path d="M1 20.2 H4.3 A3.2 3.2 0 0 0 10.7 20.2 H13.7"/><path d="M13.7 20.2 H17.1 A3.05 3.05 0 0 1 23.1 20.2 H26.7"/><path d="M13.7 20.2 V24.6 A2.5 2.5 0 0 1 13.7 29.6 V33.2"/><g transform="translate(24.6 8.7) rotate(45)"><path d="M-6.6 -6.6 H6.6 V6.6 H2.4 A2.6 2.6 0 0 0 -2.4 6.6 H-6.6 V2.3 A2.5 2.5 0 0 1 -6.6 -2.3 Z"/></g></g></g>
</svg>
<div class="a" style="left:485.1px;top:101.8px;width:19.8px;height:20px;background:#3a3d3e"></div>
<svg class="a" style="left:487px;top:105px" width="16" height="14" viewBox="0 0 16 14"><path d="M4.6 3.8 L2 7.2 L4.6 10.6 M11 3.8 L13.6 7.2 L11 10.6" fill="none" stroke="#b2b3b5" stroke-width="1.1" stroke-linecap="round" stroke-linejoin="round"/><path d="M7.8 2.2 V12" stroke="#8a8b8d" stroke-width="2"/></svg>
<div class="a" style="left:63.9px;top:45.9px;width:12.2px;height:12.2px;border-radius:50%;background:#fe5f57"></div>
<div class="a" style="left:84.0px;top:45.9px;width:12.2px;height:12.2px;border-radius:50%;background:#febc2e"></div>
<div class="a" style="left:103.9px;top:45.9px;width:12.2px;height:12.2px;border-radius:50%;background:#28c840"></div>
<div class="t" style="left:956.3px;top:44.90px;font-size:13px;line-height:13px;color:#f6f6f6;font-weight:700;letter-spacing:0.281px;text-shadow:0 0 .5px #f6f6f6;">VPIN Buttons - end</div>
<svg class="a" style="left:66.0px;top:73.0px;" width="22" height="22" viewBox="0 0 22 22"><path d="M11 1.2 L20.8 10.6 H18.4 V20.6 H13.4 V13.4 H8.8 V20.6 H3.6 V10.6 H1.2 Z" fill="#fff"/></svg>
<div class="a" style="left:97.0px;top:66.0px;width:136.2px;height:35.8px;background:#21a452"></div>
<svg class="a" style="left:125.0px;top:74.0px;" width="20" height="21" viewBox="0 0 20 21"><path d="M9.6 2.6 L16.4 6 V14.2 L9.6 17.8 L2.8 14.2 V6Z M3 6.2 L9.6 9.8 L16.2 6.2" fill="none" stroke="#fff" stroke-width="1.25" stroke-linejoin="round"/></svg>
<div class="t" style="left:153.9px;top:76.35px;font-size:14px;line-height:14px;color:#fff;font-weight:400;letter-spacing:-0.085px;text-shadow:0 0 .4px #fff;">Prepare</div>
<svg class="a" style="left:261.0px;top:74.0px;" width="20" height="21" viewBox="0 0 20 21"><path d="M9.8 2.6 L16.8 6.2 L9.8 9.8 L2.8 6.2Z M2.8 9.6 L9.8 13.2 L16.8 9.6 M2.8 13 L9.8 16.6 L16.8 13" fill="none" stroke="#fff" stroke-width="1.25" stroke-linejoin="round" stroke-linecap="round"/></svg>
<div class="t" style="left:289.8px;top:76.35px;font-size:14px;line-height:14px;color:#fff;font-weight:400;letter-spacing:0.051px;text-shadow:0 0 .4px #fff;">Preview</div>
<svg class="a" style="left:400.0px;top:74.0px;" width="20" height="21" viewBox="0 0 20 21"><g fill="none" stroke="#fff" stroke-width="1.25" stroke-linejoin="round" stroke-linecap="round"><rect x="2.2" y="2.6" width="6.6" height="5.6" rx="1"/><path d="M5.5 8.2 V9.8"/><path d="M12 3 H16.6 Q17.6 3 17.6 4 V6"/><path d="M2.4 12.4 V16 Q2.4 17 3.4 17 H5.2"/><rect x="10.6" y="10.6" width="7" height="7" rx="1"/><rect x="12.6" y="13.6" width="3" height="2" /></g></svg>
<div class="t" style="left:429.1px;top:76.35px;font-size:14px;line-height:14px;color:#fff;font-weight:400;letter-spacing:0.021px;text-shadow:0 0 .4px #fff;">Device</div>
<svg class="a" style="left:535.5px;top:74.0px;" width="20" height="21" viewBox="0 0 20 21"><g fill="none" stroke="#fff" stroke-width="1.25" stroke-linejoin="round" stroke-linecap="round"><rect x="2.2" y="3" width="15" height="14.4" rx="1.6"/><path d="M5.4 7 H6.2 M8.6 7 H14 M5.4 10.2 H6.2 M8.6 10.2 H14 M5.4 13.4 H6.2 M8.6 13.4 H14"/></g></svg>
<div class="t" style="left:563.9px;top:76.35px;font-size:14px;line-height:14px;color:#fff;font-weight:400;letter-spacing:0.204px;text-shadow:0 0 .4px #fff;">Project</div>
<svg class="a" style="left:659.0px;top:74.0px;" width="20" height="21" viewBox="0 0 20 21"><path d="M9.80 4.50 L10.03 4.50 L10.26 4.52 L10.49 4.54 L10.71 4.63 L10.85 5.11 L10.96 5.58 L11.13 5.69 L11.31 5.74 L11.49 5.81 L11.67 5.88 L11.85 5.95 L12.02 6.04 L12.19 6.13 L12.39 6.17 L12.80 5.91 L13.23 5.68 L13.45 5.77 L13.63 5.91 L13.80 6.07 L13.97 6.23 L14.13 6.40 L14.29 6.57 L14.43 6.75 L14.52 6.97 L14.29 7.40 L14.03 7.81 L14.07 8.01 L14.16 8.18 L14.25 8.35 L14.32 8.53 L14.39 8.71 L14.46 8.89 L14.51 9.07 L14.62 9.24 L15.09 9.35 L15.57 9.49 L15.66 9.71 L15.68 9.94 L15.70 10.17 L15.70 10.40 L15.70 10.63 L15.68 10.86 L15.66 11.09 L15.57 11.31 L15.09 11.45 L14.62 11.56 L14.51 11.73 L14.46 11.91 L14.39 12.09 L14.32 12.27 L14.25 12.45 L14.16 12.62 L14.07 12.79 L14.03 12.99 L14.29 13.40 L14.52 13.83 L14.43 14.05 L14.29 14.23 L14.13 14.40 L13.97 14.57 L13.80 14.73 L13.63 14.89 L13.45 15.03 L13.23 15.12 L12.80 14.89 L12.39 14.63 L12.19 14.67 L12.02 14.76 L11.85 14.85 L11.67 14.92 L11.49 14.99 L11.31 15.06 L11.13 15.11 L10.96 15.22 L10.85 15.69 L10.71 16.17 L10.49 16.26 L10.26 16.28 L10.03 16.30 L9.80 16.30 L9.57 16.30 L9.34 16.28 L9.11 16.26 L8.89 16.17 L8.75 15.69 L8.64 15.22 L8.47 15.11 L8.29 15.06 L8.11 14.99 L7.93 14.92 L7.75 14.85 L7.58 14.76 L7.41 14.67 L7.21 14.63 L6.80 14.89 L6.37 15.12 L6.15 15.03 L5.97 14.89 L5.80 14.73 L5.63 14.57 L5.47 14.40 L5.31 14.23 L5.17 14.05 L5.08 13.83 L5.31 13.40 L5.57 12.99 L5.53 12.79 L5.44 12.62 L5.35 12.45 L5.28 12.27 L5.21 12.09 L5.14 11.91 L5.09 11.73 L4.98 11.56 L4.51 11.45 L4.03 11.31 L3.94 11.09 L3.92 10.86 L3.90 10.63 L3.90 10.40 L3.90 10.17 L3.92 9.94 L3.94 9.71 L4.03 9.49 L4.51 9.35 L4.98 9.24 L5.09 9.07 L5.14 8.89 L5.21 8.71 L5.28 8.53 L5.35 8.35 L5.44 8.18 L5.53 8.01 L5.57 7.81 L5.31 7.40 L5.08 6.97 L5.17 6.75 L5.31 6.57 L5.47 6.40 L5.63 6.23 L5.80 6.07 L5.97 5.91 L6.15 5.77 L6.37 5.68 L6.80 5.91 L7.21 6.17 L7.41 6.13 L7.58 6.04 L7.75 5.95 L7.93 5.88 L8.11 5.81 L8.29 5.74 L8.47 5.69 L8.64 5.58 L8.75 5.11 L8.89 4.63 L9.11 4.54 L9.34 4.52 L9.57 4.50Z" fill="none" stroke="#fff" stroke-width="1.25" stroke-linejoin="round"/><path d="M9.8 13 V8.6 M8 10.2 L9.8 8.4 L11.6 10.2" fill="none" stroke="#fff" stroke-width="1.15" stroke-linecap="round" stroke-linejoin="round"/></svg>
<div class="t" style="left:687.9px;top:76.35px;font-size:14px;line-height:14px;color:#fff;font-weight:400;letter-spacing:0.216px;text-shadow:0 0 .4px #fff;">Calibration</div>
<div class="a" style="left:1664.8px;top:72.0px;width:24.4px;height:23.8px;background:#21a452;border-radius:12px 0 0 12px"></div>
<div class="a" style="left:1690.9px;top:72.0px;width:105.1px;height:23.8px;background:#828286;border-radius:0 12px 12px 0"></div>
<svg class="a" style="left:1673.9px;top:82.0px;" width="9.4" height="5.2" viewBox="0 0 9.4 5.2"><path d="M1 1 L4.70 4.20 L8.4 1" fill="none" stroke="#fff" stroke-width="1.3" stroke-linecap="round" stroke-linejoin="round"/></svg>
<div class="t" style="left:1706.2px;top:75.85px;font-size:14px;line-height:14px;color:#67676c;font-weight:400;letter-spacing:0.131px;">Slice plate</div>
<div class="a" style="left:1811.0px;top:72.0px;width:24.2px;height:23.8px;background:#21a452;border-radius:12px 0 0 12px"></div>
<div class="a" style="left:1836.9px;top:72.0px;width:104.1px;height:23.8px;background:#21a452;border-radius:0 12px 12px 0"></div>
<svg class="a" style="left:1819.9px;top:82.0px;" width="9.4" height="5.2" viewBox="0 0 9.4 5.2"><path d="M1 1 L4.70 4.20 L8.4 1" fill="none" stroke="#fff" stroke-width="1.3" stroke-linecap="round" stroke-linejoin="round"/></svg>
<div class="t" style="left:1852.2px;top:75.85px;font-size:14px;line-height:14px;color:#fff;font-weight:400;letter-spacing:0.215px;text-shadow:0 0 .4px #fff;">Print plate</div>
<div class="a" style="left:56.0px;top:101.8px;width:422.0px;height:1.2px;background:#0c0c0d"></div>
<div class="a" style="left:56.0px;top:103.0px;width:421.0px;height:1076.0px;background:#2d2d31"></div>
<div class="a" style="left:477.0px;top:102.0px;width:1.0px;height:1077.0px;background:#0c0c0d"></div>
<div class="a" style="left:478.0px;top:101.8px;width:7.1px;height:1077.2px;background:#262c2e"></div>
<div class="a" style="left:56.0px;top:103.0px;width:421.0px;height:30.6px;background:#36363c;border-bottom:1px solid #4b4b52;box-sizing:border-box"></div>
<svg class="a" style="left:66.0px;top:109.5px;" width="19" height="18" viewBox="0 0 19 18"><g fill="none" stroke="#8d8d92" stroke-width="1.1" stroke-linejoin="round"><path d="M1.6 4.6 H13.2 V16 H1.6Z"/><path d="M1.6 4.6 L4.6 1.8 H16.8 L13.2 4.6 M16.8 1.8 V13.2 L13.2 16"/><path d="M7.6 5 V8 M6 8.2 H9.2" stroke="#6d6d72"/></g><path d="M4.4 13.6 L8 11.2 H11.6 L11.2 12.6 H8.6 L7 13.8Z" fill="#1fa84f"/></svg>
<div class="t" style="left:95.3px;top:110.95px;font-size:14px;line-height:14px;color:#fff;font-weight:400;letter-spacing:0.211px;text-shadow:0 0 .4px #fff;">Printer</div>
<svg class="a" style="left:444.0px;top:108.0px;" width="20" height="20" viewBox="0 0 20 20"><path d="M10.00 3.20 L10.27 3.21 L10.54 3.22 L10.81 3.25 L11.07 3.36 L11.23 3.91 L11.35 4.46 L11.55 4.59 L11.77 4.65 L11.98 4.73 L12.19 4.81 L12.40 4.90 L12.60 5.00 L12.80 5.10 L13.03 5.16 L13.51 4.85 L14.01 4.58 L14.27 4.68 L14.48 4.85 L14.68 5.03 L14.88 5.22 L15.07 5.42 L15.25 5.62 L15.42 5.83 L15.52 6.09 L15.25 6.59 L14.94 7.07 L15.00 7.30 L15.10 7.50 L15.20 7.70 L15.29 7.91 L15.37 8.12 L15.45 8.33 L15.51 8.55 L15.64 8.75 L16.19 8.87 L16.74 9.03 L16.85 9.29 L16.88 9.56 L16.89 9.83 L16.90 10.10 L16.89 10.37 L16.88 10.64 L16.85 10.91 L16.74 11.17 L16.19 11.33 L15.64 11.45 L15.51 11.65 L15.45 11.87 L15.37 12.08 L15.29 12.29 L15.20 12.50 L15.10 12.70 L15.00 12.90 L14.94 13.13 L15.25 13.61 L15.52 14.11 L15.42 14.37 L15.25 14.58 L15.07 14.78 L14.88 14.98 L14.68 15.17 L14.48 15.35 L14.27 15.52 L14.01 15.62 L13.51 15.35 L13.03 15.04 L12.80 15.10 L12.60 15.20 L12.40 15.30 L12.19 15.39 L11.98 15.47 L11.77 15.55 L11.55 15.61 L11.35 15.74 L11.23 16.29 L11.07 16.84 L10.81 16.95 L10.54 16.98 L10.27 16.99 L10.00 17.00 L9.73 16.99 L9.46 16.98 L9.19 16.95 L8.93 16.84 L8.77 16.29 L8.65 15.74 L8.45 15.61 L8.23 15.55 L8.02 15.47 L7.81 15.39 L7.60 15.30 L7.40 15.20 L7.20 15.10 L6.97 15.04 L6.49 15.35 L5.99 15.62 L5.73 15.52 L5.52 15.35 L5.32 15.17 L5.12 14.98 L4.93 14.78 L4.75 14.58 L4.58 14.37 L4.48 14.11 L4.75 13.61 L5.06 13.13 L5.00 12.90 L4.90 12.70 L4.80 12.50 L4.71 12.29 L4.63 12.08 L4.55 11.87 L4.49 11.65 L4.36 11.45 L3.81 11.33 L3.26 11.17 L3.15 10.91 L3.12 10.64 L3.11 10.37 L3.10 10.10 L3.11 9.83 L3.12 9.56 L3.15 9.29 L3.26 9.03 L3.81 8.87 L4.36 8.75 L4.49 8.55 L4.55 8.33 L4.63 8.12 L4.71 7.91 L4.80 7.70 L4.90 7.50 L5.00 7.30 L5.06 7.07 L4.75 6.59 L4.48 6.09 L4.58 5.83 L4.75 5.62 L4.93 5.42 L5.12 5.22 L5.32 5.03 L5.52 4.85 L5.73 4.68 L5.99 4.58 L6.49 4.85 L6.97 5.16 L7.20 5.10 L7.40 5.00 L7.60 4.90 L7.81 4.81 L8.02 4.73 L8.23 4.65 L8.45 4.59 L8.65 4.46 L8.77 3.91 L8.93 3.36 L9.19 3.25 L9.46 3.22 L9.73 3.21Z" fill="none" stroke="#e8e8ea" stroke-width="1.4" stroke-linejoin="round"/><circle cx="10" cy="10.1" r="2.28" fill="none" stroke="#e8e8ea" stroke-width="1.4"/></svg>
<div class="a" style="left:61.0px;top:138.0px;width:211.8px;height:97.4px;border:1px solid #46464c;border-radius:8px;box-sizing:border-box;background:#2d2d31"></div>
<div class="a" style="left:277.0px;top:138.0px;width:96.0px;height:97.4px;border:1px solid #46464c;border-radius:8px;box-sizing:border-box;background:#2d2d31"></div>
<div class="a" style="left:377.2px;top:138.0px;width:95.7px;height:97.4px;border:1.4px solid #21a452;border-radius:8px;box-sizing:border-box;background:#36363c"></div>
<svg class="a" style="left:140px;top:145px" width="48" height="56" viewBox="140 145 48 56"><path d="M162.2 153.6 Q165 149.6 169 150.3 Q174.4 151.6 175.7 160.6" fill="none" stroke="#4c4c50" stroke-width="0.6" stroke-dasharray="2.2 1"/><rect x="146.6" y="188.2" width="23.2" height="0.8" fill="#55555a"/><rect x="170.9" y="162" width="5.2" height="29.6" fill="#dadadc"/><rect x="172.4" y="162" width="1.6" height="29.6" fill="#ececee"/><rect x="176.1" y="163" width="1.1" height="28.6" fill="#6f7074"/><rect x="170.4" y="161.3" width="5.6" height="5" rx="1" fill="#d4d4d6"/><rect x="172.6" y="162.4" width="1.3" height="3" fill="#66676b"/><rect x="147.1" y="166.9" width="23.6" height="2.3" rx=".6" fill="#e2e2e4"/><rect x="169.7" y="165.8" width="8" height="4.4" fill="#dcdcde"/><rect x="177" y="165.2" width="3.5" height="3.8" rx="1.2" fill="#88898d"/><rect x="155.4" y="160.5" width="7.2" height="9.2" rx="1" fill="#d8d8da"/><rect x="160.6" y="160.8" width="2" height="8" fill="#b9babd"/><rect x="157" y="157.1" width="2" height="3.4" fill="#d2d2d4"/><rect x="157" y="164.8" width="2.2" height="1.5" fill="#8a6a1e"/><rect x="155.6" y="169.8" width="6.4" height="1" fill="#55565a"/><path d="M147 172.6 L149 170.4 L149.6 171 L148.6 172.4 L151.6 172.2 V172.8Z" fill="#d0d0d2"/><path d="M148.2 196.3 Q148.4 190.8 152.6 190.2 Q156.4 189.9 158.4 192.2 L160.4 196.3Z" fill="#dededf"/><rect x="157.6" y="192.6" width="4" height="3.7" fill="#c6c6c8"/><path d="M161.6 192.2 H167 L165.6 196.4 H159.6Z" fill="#0e0e10"/><rect x="166.4" y="191.4" width="11.8" height="4.8" fill="#9d9ea1"/><rect x="170.9" y="190" width="6.3" height="2" fill="#c9c9cb"/></svg>
<svg class="a" style="left:99.5px;top:211.6px;" width="11.6" height="5.7" viewBox="0 0 11.6 5.7"><path d="M1 1 L5.80 4.70 L10.6 1" fill="none" stroke="#c2c2c6" stroke-width="1.1" stroke-linecap="round" stroke-linejoin="round"/></svg>
<div class="t" style="left:117.4px;top:208.15px;font-size:14px;line-height:14px;color:#fff;font-weight:400;letter-spacing:-0.013px;text-shadow:0 0 .4px #fff;">Bambu Lab A1 mini</div>
<svg class="a" style="left:302.0px;top:151.0px;" width="46" height="49" viewBox="0 0 46 49"><defs><linearGradient id="plg" x1="0" y1="0" x2="1" y2="1"><stop offset="0" stop-color="#434347"/><stop offset="1" stop-color="#38383b"/></linearGradient></defs>
      <path d="M2 3.4 H12 L13.2 1.8 H20.6 L21.8 3.4 H30 L31 1.8 H38.4 L39.6 3.4 H44.2 V45 H38 L37 46.6 H17 L16 45 H2Z" fill="url(#plg)"/>
      <path d="M3.6 8 V42" stroke="#4d4d51" stroke-width="1" stroke-dasharray="1.2 1"/><path d="M18 45.8 H36" stroke="#56565a" stroke-width="0.8"/><path d="M39.6 43.4 L42.6 40.6 V43.4Z" fill="#55555a"/></svg>
<svg class="a" style="left:350.0px;top:147.6px;" width="14" height="14" viewBox="0 0 14 14"><circle cx="7" cy="7" r="5.6" fill="none" stroke="#9a9a9f" stroke-width="1"/><path d="M7 6.4 V9.8" stroke="#9a9a9f" stroke-width="1.2" stroke-linecap="round"/><circle cx="7" cy="4.4" r="0.7" fill="#9a9a9f"/></svg>
<svg class="a" style="left:285.6px;top:211.6px;" width="11.6" height="5.7" viewBox="0 0 11.6 5.7"><path d="M1 1 L5.80 4.70 L10.6 1" fill="none" stroke="#c2c2c6" stroke-width="1.1" stroke-linecap="round" stroke-linejoin="round"/></svg>
<div class="t" style="left:303.2px;top:208.15px;font-size:14px;line-height:14px;color:#fff;font-weight:400;letter-spacing:0.172px;text-shadow:0 0 .4px #fff;">Smooth...</div>
<svg class="a" style="left:405px;top:158px" width="40" height="38" viewBox="405 158 40 38"><g fill="none" stroke="#1fb455" stroke-width="2.3" stroke-linecap="butt"><path d="M416.67 169.04 A10.4 10.4 0 0 1 434.70 174.55"/><path d="M432.25 182.82 A10.4 10.4 0 0 1 414.10 177.45"/></g><path d="M433.7 173.6 L439.6 170.9 L437.2 177.8Z" fill="#1fb455"/><path d="M415.0 173.0 L409.6 180.1 L414.0 180.9Z" fill="#1fb455"/></svg>
<div class="t" style="left:395.3px;top:196.75px;font-size:14px;line-height:14px;color:#fff;font-weight:400;letter-spacing:0.163px;text-shadow:0 0 .4px #fff;">Sync info</div>
<div class="t" style="left:72.1px;top:241.69px;font-size:11px;line-height:11px;color:#6d6d73;font-weight:400;letter-spacing:0.275px;">Nozzle</div>
<div class="a" style="left:61.0px;top:252.4px;width:411.9px;height:61.2px;border:1px solid #3b3b41;border-radius:7px;box-sizing:border-box"></div>
<div class="t" style="left:73.2px;top:276.15px;font-size:14px;line-height:14px;color:#fff;font-weight:400;letter-spacing:0.200px;text-shadow:0 0 .4px #fff;">Diameter</div>
<div class="a" style="left:136.2px;top:270.4px;width:129.7px;height:24.4px;border:1px solid #4a4a51;box-sizing:border-box"></div>
<svg class="a" style="left:142.6px;top:279.3px;" width="11.6" height="5.7" viewBox="0 0 11.6 5.7"><path d="M1 1 L5.80 4.70 L10.6 1" fill="none" stroke="#c2c2c6" stroke-width="1.1" stroke-linecap="round" stroke-linejoin="round"/></svg>
<div class="t" style="left:160.6px;top:276.15px;font-size:14px;line-height:14px;color:#fff;font-weight:400;letter-spacing:-0.034px;text-shadow:0 0 .4px #fff;">0.4</div>
<div class="t" style="left:276.0px;top:276.15px;font-size:14px;line-height:14px;color:#fff;font-weight:400;letter-spacing:-0.054px;text-shadow:0 0 .4px #fff;">Flow</div>
<div class="a" style="left:310.3px;top:270.4px;width:142.7px;height:24.4px;border:1px solid #4a4a51;box-sizing:border-box"></div>
<svg class="a" style="left:316.6px;top:279.3px;" width="11.6" height="5.7" viewBox="0 0 11.6 5.7"><path d="M1 1 L5.80 4.70 L10.6 1" fill="none" stroke="#c2c2c6" stroke-width="1.1" stroke-linecap="round" stroke-linejoin="round"/></svg>
<div class="t" style="left:334.2px;top:276.15px;font-size:14px;line-height:14px;color:#fff;font-weight:400;letter-spacing:0.153px;text-shadow:0 0 .4px #fff;">Standard</div>
<div class="a" style="left:56.0px;top:319.0px;width:421.0px;height:30.6px;background:#36363c;border-bottom:1px solid #4b4b52;box-sizing:border-box"></div>
<svg class="a" style="left:66.0px;top:325.0px;" width="19" height="18" viewBox="0 0 19 18"><g fill="none" stroke-width="1.1" stroke-linecap="round"><path d="M4.2 2.4 Q2.2 9 4.2 15.6" stroke="#8d8d92"/><path d="M7.2 2.4 Q5.2 9 7.2 15.6" stroke="#1fa84f"/><path d="M10 2.4 Q8 9 10 15.6" stroke="#1fa84f"/><path d="M12.8 2.4 Q10.8 9 12.8 15.6" stroke="#1fa84f"/><ellipse cx="15.2" cy="9" rx="1.6" ry="6.7" stroke="#8d8d92"/></g></svg>
<div class="t" style="left:95.3px;top:326.65px;font-size:14px;line-height:14px;color:#fff;font-weight:400;letter-spacing:0.178px;text-shadow:0 0 .4px #fff;">Project Filaments</div>
<svg class="a" style="left:359.0px;top:326.0px;" width="16" height="16" viewBox="0 0 16 16"><path d="M8 2.4 V13.6 M2.4 8 H13.6" stroke="#d2d2d4" stroke-width="1.3" stroke-linecap="round"/></svg>
<svg class="a" style="left:387.0px;top:326.0px;" width="16" height="16" viewBox="0 0 16 16"><path d="M2.6 8 H13.4" stroke="#d2d2d4" stroke-width="1.3" stroke-linecap="round"/></svg>
<svg class="a" style="left:413.0px;top:324.0px;" width="22" height="20" viewBox="0 0 22 20"><g fill="none" stroke="#e6e6e8" stroke-width="1.15" stroke-linejoin="round" stroke-linecap="round"><path d="M3 7.2 V4.2 Q3 2.6 4.6 2.6 H15.6 Q17.2 2.6 17.2 4.2 V7.2"/><path d="M3 7.2 H17.2"/><path d="M5.6 3 V6.4 M8.2 3 V6.4 M10.8 3 V6.4 M13.4 3 V6.4"/><path d="M10 15.6 H4.4 Q2.6 15.6 2.6 13.8 V9.4 H13"/><circle cx="15.2" cy="13.6" r="4.2"/><path d="M13.2 12.6 H17 M17.2 14.6 H13.4"/></g></svg>
<svg class="a" style="left:443.0px;top:324.0px;" width="20" height="20" viewBox="0 0 20 20"><path d="M10.00 3.30 L10.27 3.31 L10.54 3.32 L10.81 3.35 L11.07 3.46 L11.23 4.01 L11.35 4.56 L11.55 4.69 L11.77 4.75 L11.98 4.83 L12.19 4.91 L12.40 5.00 L12.60 5.10 L12.80 5.20 L13.03 5.26 L13.51 4.95 L14.01 4.68 L14.27 4.78 L14.48 4.95 L14.68 5.13 L14.88 5.32 L15.07 5.52 L15.25 5.72 L15.42 5.93 L15.52 6.19 L15.25 6.69 L14.94 7.17 L15.00 7.40 L15.10 7.60 L15.20 7.80 L15.29 8.01 L15.37 8.22 L15.45 8.43 L15.51 8.65 L15.64 8.85 L16.19 8.97 L16.74 9.13 L16.85 9.39 L16.88 9.66 L16.89 9.93 L16.90 10.20 L16.89 10.47 L16.88 10.74 L16.85 11.01 L16.74 11.27 L16.19 11.43 L15.64 11.55 L15.51 11.75 L15.45 11.97 L15.37 12.18 L15.29 12.39 L15.20 12.60 L15.10 12.80 L15.00 13.00 L14.94 13.23 L15.25 13.71 L15.52 14.21 L15.42 14.47 L15.25 14.68 L15.07 14.88 L14.88 15.08 L14.68 15.27 L14.48 15.45 L14.27 15.62 L14.01 15.72 L13.51 15.45 L13.03 15.14 L12.80 15.20 L12.60 15.30 L12.40 15.40 L12.19 15.49 L11.98 15.57 L11.77 15.65 L11.55 15.71 L11.35 15.84 L11.23 16.39 L11.07 16.94 L10.81 17.05 L10.54 17.08 L10.27 17.09 L10.00 17.10 L9.73 17.09 L9.46 17.08 L9.19 17.05 L8.93 16.94 L8.77 16.39 L8.65 15.84 L8.45 15.71 L8.23 15.65 L8.02 15.57 L7.81 15.49 L7.60 15.40 L7.40 15.30 L7.20 15.20 L6.97 15.14 L6.49 15.45 L5.99 15.72 L5.73 15.62 L5.52 15.45 L5.32 15.27 L5.12 15.08 L4.93 14.88 L4.75 14.68 L4.58 14.47 L4.48 14.21 L4.75 13.71 L5.06 13.23 L5.00 13.00 L4.90 12.80 L4.80 12.60 L4.71 12.39 L4.63 12.18 L4.55 11.97 L4.49 11.75 L4.36 11.55 L3.81 11.43 L3.26 11.27 L3.15 11.01 L3.12 10.74 L3.11 10.47 L3.10 10.20 L3.11 9.93 L3.12 9.66 L3.15 9.39 L3.26 9.13 L3.81 8.97 L4.36 8.85 L4.49 8.65 L4.55 8.43 L4.63 8.22 L4.71 8.01 L4.80 7.80 L4.90 7.60 L5.00 7.40 L5.06 7.17 L4.75 6.69 L4.48 6.19 L4.58 5.93 L4.75 5.72 L4.93 5.52 L5.12 5.32 L5.32 5.13 L5.52 4.95 L5.73 4.78 L5.99 4.68 L6.49 4.95 L6.97 5.26 L7.20 5.20 L7.40 5.10 L7.60 5.00 L7.81 4.91 L8.02 4.83 L8.23 4.75 L8.45 4.69 L8.65 4.56 L8.77 4.01 L8.93 3.46 L9.19 3.35 L9.46 3.32 L9.73 3.31Z" fill="none" stroke="#e8e8ea" stroke-width="1.4" stroke-linejoin="round"/><circle cx="10" cy="10.2" r="2.28" fill="none" stroke="#e8e8ea" stroke-width="1.4"/></svg>
<div class="a" style="left:67.1px;top:373.1px;width:19.8px;height:19.9px;background:#5b3f80"></div>
<div class="t" style="left:73.0px;top:376.53px;font-size:14.5px;line-height:14.5px;color:#fff;font-weight:700;">1</div>
<div class="a" style="left:93.1px;top:368.2px;width:345.7px;height:29.4px;border:1px solid #4a4a51;box-sizing:border-box"></div>
<svg class="a" style="left:99.8px;top:380.5px;" width="11.6" height="5.7" viewBox="0 0 11.6 5.7"><path d="M1 1 L5.80 4.70 L10.6 1" fill="none" stroke="#c2c2c6" stroke-width="1.1" stroke-linecap="round" stroke-linejoin="round"/></svg>
<svg class="a" style="left:120.0px;top:376.4px;" width="12" height="14.4" viewBox="0 0 12 14.4"><g fill="#fff"><path d="M0.3 0.4 H4.6 V7.2 L0.3 8.6Z"/><path d="M0.3 9.9 L4.6 8.5 V13.9 H0.3Z"/><path d="M5.8 0.4 H11.1 V6.6 L5.8 5.0Z"/><path d="M5.8 6.3 L11.1 7.9 V13.9 H5.8Z"/></g></svg>
<div class="t" style="left:136.1px;top:377.05px;font-size:14px;line-height:14px;color:#fff;font-weight:400;letter-spacing:-0.095px;text-shadow:0 0 .4px #fff;">PLA Galaxy</div>
<svg class="a" style="left:444.0px;top:374.4px;" width="18" height="18" viewBox="0 0 18 18"><circle cx="9" cy="8.8" r="6.9" fill="none" stroke="#e6e6e8" stroke-width="1.15"/><circle cx="6" cy="8.8" r=".95" fill="#e6e6e8"/><circle cx="9" cy="8.8" r=".95" fill="#e6e6e8"/><circle cx="12" cy="8.8" r=".95" fill="#e6e6e8"/></svg>
<div class="a" style="left:56.0px;top:417.2px;width:421.0px;height:30.6px;background:#36363c;border-bottom:1px solid #4b4b52;box-sizing:border-box"></div>
<svg class="a" style="left:66.0px;top:424.0px;" width="19" height="18" viewBox="0 0 19 18"><g fill="none" stroke-width="1.15" stroke-linejoin="round" stroke-linecap="round"><path d="M4.6 2.2 H16 L13.4 6.6 H2Z" stroke="#8d8d92"/><path d="M2.4 9.2 L3.6 10.8 H13.4 L15.8 6.8" stroke="#1fa84f"/><path d="M2.4 12.8 L3.6 14.6 H13.4 L15.8 10.6" stroke="#8d8d92"/></g></svg>
<div class="t" style="left:95.4px;top:424.75px;font-size:14px;line-height:14px;color:#fff;font-weight:400;letter-spacing:0.037px;text-shadow:0 0 .4px #fff;">Process</div>
<div class="a" style="left:156.0px;top:421.9px;width:108.6px;height:20.4px;background:#2a2a2e;border-radius:11px"></div>
<div class="a" style="left:156.0px;top:421.9px;width:55.4px;height:20.4px;background:#21a452;border-radius:11px"></div>
<div class="t" style="left:166.1px;top:424.82px;font-size:12.5px;line-height:12.5px;color:#fff;font-weight:400;letter-spacing:-0.088px;text-shadow:0 0 .4px #fff;">Global</div>
<div class="t" style="left:214.0px;top:424.82px;font-size:12.5px;line-height:12.5px;color:#6d6d73;font-weight:400;letter-spacing:0.185px;">Objects</div>
<div class="t" style="left:311.2px;top:424.75px;font-size:14px;line-height:14px;color:#fff;font-weight:400;letter-spacing:0.088px;text-shadow:0 0 .4px #fff;">Advanced</div>
<div class="a" style="left:380.2px;top:424.1px;width:27.2px;height:16.0px;background:#a6a6a9;border-radius:8px"></div>
<div class="a" style="left:380.6px;top:424.4px;width:15.4px;height:15.4px;background:#fff;border-radius:50%"></div>
<svg class="a" style="left:416.0px;top:423.0px;" width="18" height="18" viewBox="0 0 18 18"><g stroke="#e6e6e8" stroke-width="1.3" stroke-linecap="round"><path d="M6.2 4.2 H15 M6.2 8.8 H15 M6.2 13.4 H15"/><path d="M2.6 4.2 H3 M2.6 8.8 H3 M2.6 13.4 H3"/></g></svg>
<svg class="a" style="left:444.0px;top:423.0px;" width="18" height="18" viewBox="0 0 18 18"><g fill="none" stroke="#e6e6e8" stroke-width="1.2" stroke-linecap="round" stroke-linejoin="round"><path d="M3.4 15 L14.4 2.6"/><path d="M2.6 4.2 H8.4 M6.2 2 L8.4 4.2 L6.2 6.4"/><path d="M15.4 13 H9.8 M12 10.8 L9.8 13 L12 15.2"/></g></svg>
<svg class="a" style="left:66.0px;top:464.0px;" width="18" height="18" viewBox="0 0 18 18"><g fill="none" stroke="#e8693c" stroke-width="1.2" stroke-linecap="round" stroke-linejoin="round"><path d="M9.2 15 A5.9 5.9 0 1 1 15 8.6"/><path d="M13 8.2 L17.2 8.6 L15.2 11.6Z" fill="#e8693c" stroke-width=".6"/></g></svg>
<div class="a" style="left:93.1px;top:460.3px;width:311.6px;height:24.3px;border:1px solid #4a4a51;box-sizing:border-box"></div>
<svg class="a" style="left:99.8px;top:469.8px;" width="11.6" height="5.7" viewBox="0 0 11.6 5.7"><path d="M1 1 L5.80 4.70 L10.6 1" fill="none" stroke="#c2c2c6" stroke-width="1.1" stroke-linecap="round" stroke-linejoin="round"/></svg>
<div class="t" style="left:117.5px;top:466.35px;font-size:14px;line-height:14px;color:#fff;font-weight:400;letter-spacing:0.105px;text-shadow:0 0 .4px #fff;">* 0.20mm Strength @BBL A1M</div>
<svg class="a" style="left:416.0px;top:464.4px;" width="18" height="18" viewBox="0 0 18 18"><g fill="none" stroke="#e6e6e8" stroke-width="1.15" stroke-linejoin="round"><path d="M3.2 3 H11.4 L14.6 6.2 V14.8 H3.2Z"/><path d="M5.6 3 V6.6 H10.6 V3"/><path d="M5.4 14.8 V10.2 H12.4 V14.8"/></g></svg>
<svg class="a" style="left:444.0px;top:464.4px;" width="18" height="18" viewBox="0 0 18 18"><g fill="none" stroke="#e6e6e8" stroke-width="1.25" stroke-linecap="round"><circle cx="7.6" cy="7.4" r="4.9"/><path d="M11.2 11 L15.6 15.6"/></g></svg>
<div class="t" style="left:71.2px;top:499.75px;font-size:14px;line-height:14px;color:#c9c9cc;font-weight:700;letter-spacing:0.189px;">Quality</div>
<div class="a" style="left:68.3px;top:517.8px;width:54.7px;height:3.4px;background:#21a452"></div>
<div class="t" style="left:152.3px;top:499.75px;font-size:14px;line-height:14px;color:#ee7a4f;font-weight:400;letter-spacing:0.295px;text-shadow:0 0 .4px #ee7a4f;">Strength</div>
<div class="t" style="left:241.2px;top:499.75px;font-size:14px;line-height:14px;color:#ee7a4f;font-weight:400;letter-spacing:0.376px;text-shadow:0 0 .4px #ee7a4f;">Support</div>
<div class="t" style="left:326.4px;top:499.75px;font-size:14px;line-height:14px;color:#6d6d73;font-weight:400;letter-spacing:0.097px;">Others</div>
<div class="a" style="left:56.0px;top:521.2px;width:421.0px;height:1.0px;background:#4b4b52"></div>
<svg class="a" style="left:66.5px;top:539.5px;" width="18" height="16" viewBox="0 0 18 16"><g fill="#e6e6e8"><path d="M1.4 5.5 Q1.6 0.9 5.2 0.6 H13.4 Q17 0.9 17.2 5.5Z"/><rect x="1.4" y="6.7" width="15.8" height="2" rx=".4"/><rect x="1.4" y="9.7" width="15.8" height="1.9" rx=".4"/><rect x="1.4" y="12.6" width="15.8" height="2" rx=".4"/></g></svg>
<div class="t" style="left:89.7px;top:541.15px;font-size:14px;line-height:14px;color:#fff;font-weight:700;letter-spacing:0.095px;">Layer height</div>
<div class="a" style="left:180.0px;top:547.0px;width:287.0px;height:1.0px;background:#48484e"></div>
<div class="t" style="left:87.2px;top:572.35px;font-size:14px;line-height:14px;color:#c4c4c8;font-weight:400;letter-spacing:0.176px;">Layer height</div>
<div class="a" style="left:307.2px;top:565.6px;width:119.6px;height:23.9px;border:1px solid #4a4a51;box-sizing:border-box"></div>
<div class="t" style="left:314.7px;top:571.15px;font-size:14px;line-height:14px;color:#fff;font-weight:400;letter-spacing:-0.434px;text-shadow:0 0 .4px #fff;">0.2</div>
<div class="t" style="left:396.3px;top:574.04px;font-size:12px;line-height:12px;color:#7b7b80;font-weight:400;letter-spacing:0.100px;">mm</div>
<div class="t" style="left:87.2px;top:600.35px;font-size:14px;line-height:14px;color:#c4c4c8;font-weight:400;letter-spacing:0.187px;">Initial layer height</div>
<div class="a" style="left:307.2px;top:593.8px;width:119.6px;height:23.8px;border:1px solid #4a4a51;box-sizing:border-box"></div>
<div class="t" style="left:314.7px;top:599.35px;font-size:14px;line-height:14px;color:#fff;font-weight:400;letter-spacing:-0.434px;text-shadow:0 0 .4px #fff;">0.2</div>
<div class="t" style="left:396.3px;top:602.24px;font-size:12px;line-height:12px;color:#7b7b80;font-weight:400;letter-spacing:0.100px;">mm</div>
<svg class="a" style="left:66.5px;top:640.8px;" width="18" height="17" viewBox="0 0 18 17"><rect x="1.7" y="1.5" width="14" height="13.4" rx=".4" fill="#4a4a50" stroke="#dcdcde" stroke-width="1.3"/><path d="M4.6 12.4 Q4.8 6.4 12.8 4.2" fill="none" stroke="#e8e8ea" stroke-width="1" stroke-dasharray="1 1.3"/></svg>
<div class="t" style="left:89.1px;top:642.75px;font-size:14px;line-height:14px;color:#fff;font-weight:700;letter-spacing:0.080px;">Seam</div>
<div class="a" style="left:133.4px;top:649.2px;width:333.6px;height:1.0px;background:#48484e"></div>
<div class="t" style="left:87.2px;top:674.15px;font-size:14px;line-height:14px;color:#c4c4c8;font-weight:400;letter-spacing:0.190px;">Seam position</div>
<div class="a" style="left:307.2px;top:667.7px;width:119.6px;height:23.9px;border:1px solid #4a4a51;box-sizing:border-box"></div>
<svg class="a" style="left:313.9px;top:676.1px;" width="11.6" height="5.7" viewBox="0 0 11.6 5.7"><path d="M1 1 L5.80 4.70 L10.6 1" fill="none" stroke="#c2c2c6" stroke-width="1.1" stroke-linecap="round" stroke-linejoin="round"/></svg>
<div class="t" style="left:331.4px;top:672.95px;font-size:14px;line-height:14px;color:#fff;font-weight:400;letter-spacing:0.199px;text-shadow:0 0 .4px #fff;">Aligned</div>
<svg class="a" style="left:65.4px;top:713.0px;" width="22" height="20" viewBox="0 0 22 20"><path d="M8.80 2.40 L9.04 2.40 L9.29 2.42 L9.53 2.44 L9.76 2.54 L9.91 3.04 L10.02 3.53 L10.20 3.65 L10.39 3.71 L10.58 3.77 L10.77 3.85 L10.95 3.93 L11.14 4.01 L11.31 4.11 L11.52 4.16 L11.95 3.88 L12.41 3.64 L12.64 3.73 L12.83 3.89 L13.01 4.05 L13.18 4.22 L13.35 4.39 L13.51 4.57 L13.67 4.76 L13.76 4.99 L13.52 5.45 L13.24 5.88 L13.29 6.09 L13.39 6.26 L13.47 6.45 L13.55 6.63 L13.63 6.82 L13.69 7.01 L13.75 7.20 L13.87 7.38 L14.36 7.49 L14.86 7.64 L14.96 7.87 L14.98 8.11 L15.00 8.36 L15.00 8.60 L15.00 8.84 L14.98 9.09 L14.96 9.33 L14.86 9.56 L14.36 9.71 L13.87 9.82 L13.75 10.00 L13.69 10.19 L13.63 10.38 L13.55 10.57 L13.47 10.75 L13.39 10.94 L13.29 11.11 L13.24 11.32 L13.52 11.75 L13.76 12.21 L13.67 12.44 L13.51 12.63 L13.35 12.81 L13.18 12.98 L13.01 13.15 L12.83 13.31 L12.64 13.47 L12.41 13.56 L11.95 13.32 L11.52 13.04 L11.31 13.09 L11.14 13.19 L10.95 13.27 L10.77 13.35 L10.58 13.43 L10.39 13.49 L10.20 13.55 L10.02 13.67 L9.91 14.16 L9.76 14.66 L9.53 14.76 L9.29 14.78 L9.04 14.80 L8.80 14.80 L8.56 14.80 L8.31 14.78 L8.07 14.76 L7.84 14.66 L7.69 14.16 L7.58 13.67 L7.40 13.55 L7.21 13.49 L7.02 13.43 L6.83 13.35 L6.65 13.27 L6.46 13.19 L6.29 13.09 L6.08 13.04 L5.65 13.32 L5.19 13.56 L4.96 13.47 L4.77 13.31 L4.59 13.15 L4.42 12.98 L4.25 12.81 L4.09 12.63 L3.93 12.44 L3.84 12.21 L4.08 11.75 L4.36 11.32 L4.31 11.11 L4.21 10.94 L4.13 10.75 L4.05 10.57 L3.97 10.38 L3.91 10.19 L3.85 10.00 L3.73 9.82 L3.24 9.71 L2.74 9.56 L2.64 9.33 L2.62 9.09 L2.60 8.84 L2.60 8.60 L2.60 8.36 L2.62 8.11 L2.64 7.87 L2.74 7.64 L3.24 7.49 L3.73 7.38 L3.85 7.20 L3.91 7.01 L3.97 6.82 L4.05 6.63 L4.13 6.45 L4.21 6.26 L4.31 6.09 L4.36 5.88 L4.08 5.45 L3.84 4.99 L3.93 4.76 L4.09 4.57 L4.25 4.39 L4.42 4.22 L4.59 4.05 L4.77 3.89 L4.96 3.73 L5.19 3.64 L5.65 3.88 L6.08 4.16 L6.29 4.11 L6.46 4.01 L6.65 3.93 L6.83 3.85 L7.02 3.77 L7.21 3.71 L7.40 3.65 L7.58 3.53 L7.69 3.04 L7.84 2.54 L8.07 2.44 L8.31 2.42 L8.56 2.40Z" fill="none" stroke="#e6e6e8" stroke-width="1.1" stroke-linejoin="round"/><circle cx="8.8" cy="8.6" r="2.20" fill="none" stroke="#e6e6e8" stroke-width="1.1"/><circle cx="8.8" cy="8.6" r="1.5" fill="#b4b4b8"/><circle cx="15.2" cy="14.4" r="5.2" fill="#2d2d31"/><path d="M15.20 10.30 L15.36 10.30 L15.52 10.31 L15.68 10.33 L15.83 10.39 L15.93 10.72 L16.00 11.05 L16.12 11.12 L16.25 11.16 L16.38 11.21 L16.50 11.26 L16.62 11.31 L16.74 11.37 L16.86 11.43 L17.00 11.46 L17.28 11.28 L17.58 11.12 L17.74 11.18 L17.86 11.28 L17.98 11.39 L18.10 11.50 L18.21 11.62 L18.32 11.74 L18.42 11.86 L18.48 12.02 L18.32 12.32 L18.14 12.60 L18.17 12.74 L18.23 12.86 L18.29 12.98 L18.34 13.10 L18.39 13.22 L18.44 13.35 L18.48 13.48 L18.55 13.60 L18.88 13.67 L19.21 13.77 L19.27 13.92 L19.29 14.08 L19.30 14.24 L19.30 14.40 L19.30 14.56 L19.29 14.72 L19.27 14.88 L19.21 15.03 L18.88 15.13 L18.55 15.20 L18.48 15.32 L18.44 15.45 L18.39 15.58 L18.34 15.70 L18.29 15.82 L18.23 15.94 L18.17 16.06 L18.14 16.20 L18.32 16.48 L18.48 16.78 L18.42 16.94 L18.32 17.06 L18.21 17.18 L18.10 17.30 L17.98 17.41 L17.86 17.52 L17.74 17.62 L17.58 17.68 L17.28 17.52 L17.00 17.34 L16.86 17.37 L16.74 17.43 L16.62 17.49 L16.50 17.54 L16.38 17.59 L16.25 17.64 L16.12 17.68 L16.00 17.75 L15.93 18.08 L15.83 18.41 L15.68 18.47 L15.52 18.49 L15.36 18.50 L15.20 18.50 L15.04 18.50 L14.88 18.49 L14.72 18.47 L14.57 18.41 L14.47 18.08 L14.40 17.75 L14.28 17.68 L14.15 17.64 L14.02 17.59 L13.90 17.54 L13.78 17.49 L13.66 17.43 L13.54 17.37 L13.40 17.34 L13.12 17.52 L12.82 17.68 L12.66 17.62 L12.54 17.52 L12.42 17.41 L12.30 17.30 L12.19 17.18 L12.08 17.06 L11.98 16.94 L11.92 16.78 L12.08 16.48 L12.26 16.20 L12.23 16.06 L12.17 15.94 L12.11 15.82 L12.06 15.70 L12.01 15.58 L11.96 15.45 L11.92 15.32 L11.85 15.20 L11.52 15.13 L11.19 15.03 L11.13 14.88 L11.11 14.72 L11.10 14.56 L11.10 14.40 L11.10 14.24 L11.11 14.08 L11.13 13.92 L11.19 13.77 L11.52 13.67 L11.85 13.60 L11.92 13.48 L11.96 13.35 L12.01 13.22 L12.06 13.10 L12.11 12.98 L12.17 12.86 L12.23 12.74 L12.26 12.60 L12.08 12.32 L11.92 12.02 L11.98 11.86 L12.08 11.74 L12.19 11.62 L12.30 11.50 L12.42 11.39 L12.54 11.28 L12.66 11.18 L12.82 11.12 L13.12 11.28 L13.40 11.46 L13.54 11.43 L13.66 11.37 L13.78 11.31 L13.90 11.26 L14.02 11.21 L14.15 11.16 L14.28 11.12 L14.40 11.05 L14.47 10.72 L14.57 10.39 L14.72 10.33 L14.88 10.31 L15.04 10.30Z" fill="none" stroke="#e6e6e8" stroke-width="1.05" stroke-linejoin="round"/></svg>
<div class="t" style="left:90.3px;top:717.05px;font-size:14px;line-height:14px;color:#fff;font-weight:700;letter-spacing:0.125px;">Advanced</div>
<div class="a" style="left:163.3px;top:723.2px;width:303.7px;height:1.0px;background:#48484e"></div>
<div class="t" style="left:87.2px;top:747.65px;font-size:14px;line-height:14px;color:#c4c4c8;font-weight:400;letter-spacing:0.223px;">Only one wall on top surfaces</div>
<div class="a" style="left:307.2px;top:741.6px;width:119.6px;height:23.9px;border:1px solid #4a4a51;box-sizing:border-box"></div>
<svg class="a" style="left:313.9px;top:749.9px;" width="11.6" height="5.7" viewBox="0 0 11.6 5.7"><path d="M1 1 L5.80 4.70 L10.6 1" fill="none" stroke="#c2c2c6" stroke-width="1.1" stroke-linecap="round" stroke-linejoin="round"/></svg>
<div class="t" style="left:331.4px;top:746.85px;font-size:14px;line-height:14px;color:#fff;font-weight:400;letter-spacing:0.293px;text-shadow:0 0 .4px #fff;">Top surfaces</div>
<div class="t" style="left:87.2px;top:775.65px;font-size:14px;line-height:14px;color:#c4c4c8;font-weight:400;letter-spacing:0.178px;">Only one wall on first layer</div>
<div class="a" style="left:307.8px;top:774.3px;width:16.2px;height:15.7px;border:1.2px solid #e2e2e4;border-radius:2px;box-sizing:border-box"></div>
</div></div>
<div class="edge"></div>
</body></html>
